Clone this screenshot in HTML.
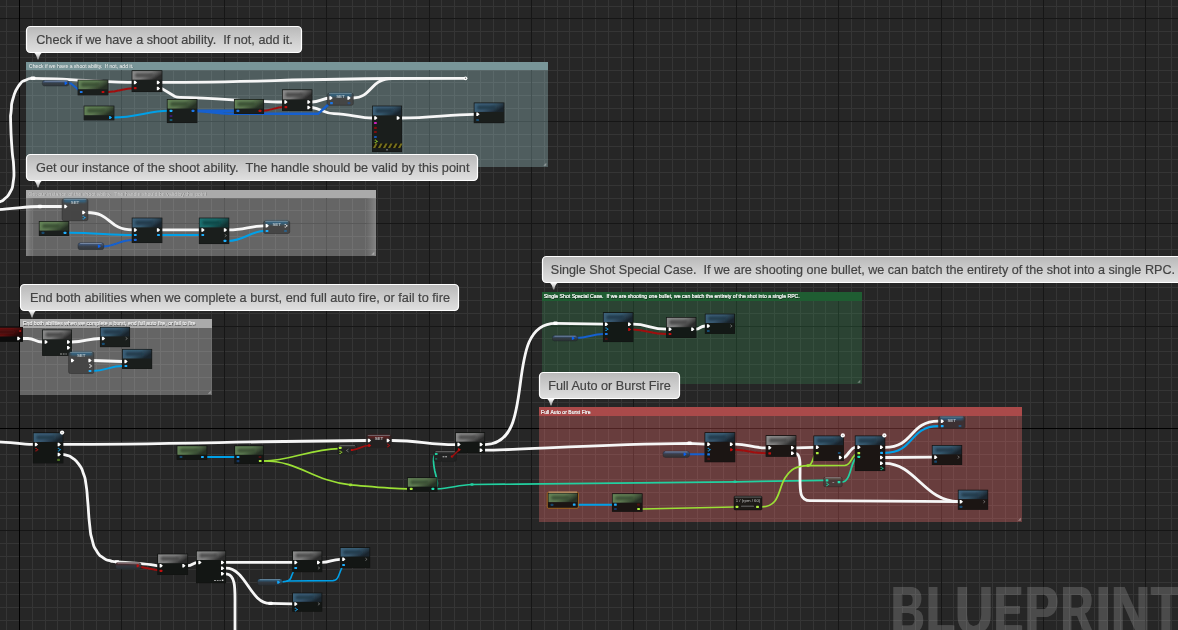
<!DOCTYPE html>
<html><head><meta charset="utf-8"><title>Blueprint</title>
<style>
html,body{margin:0;padding:0;background:#262626;overflow:hidden;}
body{width:1178px;height:630px;font-family:"Liberation Sans",sans-serif;}
svg{display:block;}
</style></head><body>
<svg width="1178" height="630" viewBox="0 0 1178 630" font-family="Liberation Sans, sans-serif">
<defs>
<linearGradient id="bub" x1="0" y1="0" x2="0" y2="1"><stop offset="0" stop-color="#b9b9b9"/><stop offset="0.55" stop-color="#cfcfcf"/><stop offset="1" stop-color="#e0e0e0"/></linearGradient>
<linearGradient id="arr" x1="0" y1="0" x2="0" y2="1"><stop offset="0" stop-color="#ffffff"/><stop offset="0.5" stop-color="#d0d0d0"/><stop offset="1" stop-color="#808080"/></linearGradient>
<linearGradient id="h_grey" x1="0" y1="0" x2="1" y2="0.45"><stop offset="0" stop-color="#8c8c8c"/><stop offset="0.55" stop-color="#8c8c8c" stop-opacity="0.92"/><stop offset="1" stop-color="#2c2c2c"/></linearGradient>
<linearGradient id="h_green" x1="0" y1="0" x2="1" y2="0.45"><stop offset="0" stop-color="#668559"/><stop offset="0.55" stop-color="#668559" stop-opacity="0.92"/><stop offset="1" stop-color="#283326"/></linearGradient>
<linearGradient id="h_blue" x1="0" y1="0" x2="1" y2="0.45"><stop offset="0" stop-color="#3e637c"/><stop offset="0.55" stop-color="#3e637c" stop-opacity="0.92"/><stop offset="1" stop-color="#1a252e"/></linearGradient>
<linearGradient id="h_teal" x1="0" y1="0" x2="1" y2="0.45"><stop offset="0" stop-color="#1e7474"/><stop offset="0.55" stop-color="#1e7474" stop-opacity="0.92"/><stop offset="1" stop-color="#123434"/></linearGradient>
<linearGradient id="h_red" x1="0" y1="0" x2="1" y2="0.45"><stop offset="0" stop-color="#6c1313"/><stop offset="0.55" stop-color="#6c1313" stop-opacity="0.92"/><stop offset="1" stop-color="#260909"/></linearGradient>
<filter id="blur1" x="-20%" y="-60%" width="140%" height="220%"><feGaussianBlur stdDeviation="1.1"/></filter>
<filter id="wblur" x="-5%" y="-5%" width="110%" height="110%"><feGaussianBlur stdDeviation="0.35"/></filter>
<linearGradient id="glowL" x1="0" y1="0" x2="1" y2="0"><stop offset="0" stop-color="#fff" stop-opacity="0.2"/><stop offset="1" stop-color="#fff" stop-opacity="0"/></linearGradient>
<linearGradient id="glowR" x1="0" y1="0" x2="1" y2="0"><stop offset="0" stop-color="#fff" stop-opacity="0"/><stop offset="1" stop-color="#fff" stop-opacity="0.2"/></linearGradient>
<linearGradient id="pg40639c" x1="0" y1="0" x2="0" y2="1"><stop offset="0" stop-color="#40639c"/><stop offset="0.55" stop-color="#333a43"/><stop offset="1" stop-color="#2c3137"/></linearGradient>
<linearGradient id="pg5e2424" x1="0" y1="0" x2="0" y2="1"><stop offset="0" stop-color="#5e2424"/><stop offset="0.55" stop-color="#333a43"/><stop offset="1" stop-color="#2c3137"/></linearGradient>
<linearGradient id="pg2f77a6" x1="0" y1="0" x2="0" y2="1"><stop offset="0" stop-color="#2f77a6"/><stop offset="0.55" stop-color="#333a43"/><stop offset="1" stop-color="#2c3137"/></linearGradient>
</defs>
<rect width="1178" height="630" fill="#262626"/>
<g shape-rendering="crispEdges"><rect x="6" y="0" width="1" height="630" fill="#353535"/>
<rect x="32" y="0" width="1" height="630" fill="#353535"/>
<rect x="45" y="0" width="1" height="630" fill="#353535"/>
<rect x="57" y="0" width="1" height="630" fill="#353535"/>
<rect x="70" y="0" width="1" height="630" fill="#353535"/>
<rect x="83" y="0" width="1" height="630" fill="#353535"/>
<rect x="96" y="0" width="1" height="630" fill="#353535"/>
<rect x="109" y="0" width="1" height="630" fill="#353535"/>
<rect x="134" y="0" width="1" height="630" fill="#353535"/>
<rect x="147" y="0" width="1" height="630" fill="#353535"/>
<rect x="160" y="0" width="1" height="630" fill="#353535"/>
<rect x="173" y="0" width="1" height="630" fill="#353535"/>
<rect x="185" y="0" width="1" height="630" fill="#353535"/>
<rect x="198" y="0" width="1" height="630" fill="#353535"/>
<rect x="211" y="0" width="1" height="630" fill="#353535"/>
<rect x="237" y="0" width="1" height="630" fill="#353535"/>
<rect x="249" y="0" width="1" height="630" fill="#353535"/>
<rect x="262" y="0" width="1" height="630" fill="#353535"/>
<rect x="275" y="0" width="1" height="630" fill="#353535"/>
<rect x="288" y="0" width="1" height="630" fill="#353535"/>
<rect x="301" y="0" width="1" height="630" fill="#353535"/>
<rect x="313" y="0" width="1" height="630" fill="#353535"/>
<rect x="339" y="0" width="1" height="630" fill="#353535"/>
<rect x="352" y="0" width="1" height="630" fill="#353535"/>
<rect x="365" y="0" width="1" height="630" fill="#353535"/>
<rect x="377" y="0" width="1" height="630" fill="#353535"/>
<rect x="390" y="0" width="1" height="630" fill="#353535"/>
<rect x="403" y="0" width="1" height="630" fill="#353535"/>
<rect x="416" y="0" width="1" height="630" fill="#353535"/>
<rect x="441" y="0" width="1" height="630" fill="#353535"/>
<rect x="454" y="0" width="1" height="630" fill="#353535"/>
<rect x="467" y="0" width="1" height="630" fill="#353535"/>
<rect x="480" y="0" width="1" height="630" fill="#353535"/>
<rect x="493" y="0" width="1" height="630" fill="#353535"/>
<rect x="505" y="0" width="1" height="630" fill="#353535"/>
<rect x="518" y="0" width="1" height="630" fill="#353535"/>
<rect x="544" y="0" width="1" height="630" fill="#353535"/>
<rect x="557" y="0" width="1" height="630" fill="#353535"/>
<rect x="569" y="0" width="1" height="630" fill="#353535"/>
<rect x="582" y="0" width="1" height="630" fill="#353535"/>
<rect x="595" y="0" width="1" height="630" fill="#353535"/>
<rect x="608" y="0" width="1" height="630" fill="#353535"/>
<rect x="621" y="0" width="1" height="630" fill="#353535"/>
<rect x="646" y="0" width="1" height="630" fill="#353535"/>
<rect x="659" y="0" width="1" height="630" fill="#353535"/>
<rect x="672" y="0" width="1" height="630" fill="#353535"/>
<rect x="685" y="0" width="1" height="630" fill="#353535"/>
<rect x="697" y="0" width="1" height="630" fill="#353535"/>
<rect x="710" y="0" width="1" height="630" fill="#353535"/>
<rect x="723" y="0" width="1" height="630" fill="#353535"/>
<rect x="749" y="0" width="1" height="630" fill="#353535"/>
<rect x="761" y="0" width="1" height="630" fill="#353535"/>
<rect x="774" y="0" width="1" height="630" fill="#353535"/>
<rect x="787" y="0" width="1" height="630" fill="#353535"/>
<rect x="800" y="0" width="1" height="630" fill="#353535"/>
<rect x="813" y="0" width="1" height="630" fill="#353535"/>
<rect x="825" y="0" width="1" height="630" fill="#353535"/>
<rect x="851" y="0" width="1" height="630" fill="#353535"/>
<rect x="864" y="0" width="1" height="630" fill="#353535"/>
<rect x="877" y="0" width="1" height="630" fill="#353535"/>
<rect x="889" y="0" width="1" height="630" fill="#353535"/>
<rect x="902" y="0" width="1" height="630" fill="#353535"/>
<rect x="915" y="0" width="1" height="630" fill="#353535"/>
<rect x="928" y="0" width="1" height="630" fill="#353535"/>
<rect x="953" y="0" width="1" height="630" fill="#353535"/>
<rect x="966" y="0" width="1" height="630" fill="#353535"/>
<rect x="979" y="0" width="1" height="630" fill="#353535"/>
<rect x="992" y="0" width="1" height="630" fill="#353535"/>
<rect x="1005" y="0" width="1" height="630" fill="#353535"/>
<rect x="1017" y="0" width="1" height="630" fill="#353535"/>
<rect x="1030" y="0" width="1" height="630" fill="#353535"/>
<rect x="1056" y="0" width="1" height="630" fill="#353535"/>
<rect x="1069" y="0" width="1" height="630" fill="#353535"/>
<rect x="1081" y="0" width="1" height="630" fill="#353535"/>
<rect x="1094" y="0" width="1" height="630" fill="#353535"/>
<rect x="1107" y="0" width="1" height="630" fill="#353535"/>
<rect x="1120" y="0" width="1" height="630" fill="#353535"/>
<rect x="1133" y="0" width="1" height="630" fill="#353535"/>
<rect x="1158" y="0" width="1" height="630" fill="#353535"/>
<rect x="1171" y="0" width="1" height="630" fill="#353535"/>
<rect x="0" y="6" width="1178" height="1" fill="#353535"/>
<rect x="0" y="31" width="1178" height="1" fill="#353535"/>
<rect x="0" y="44" width="1178" height="1" fill="#353535"/>
<rect x="0" y="57" width="1178" height="1" fill="#353535"/>
<rect x="0" y="70" width="1178" height="1" fill="#353535"/>
<rect x="0" y="82" width="1178" height="1" fill="#353535"/>
<rect x="0" y="95" width="1178" height="1" fill="#353535"/>
<rect x="0" y="108" width="1178" height="1" fill="#353535"/>
<rect x="0" y="134" width="1178" height="1" fill="#353535"/>
<rect x="0" y="146" width="1178" height="1" fill="#353535"/>
<rect x="0" y="159" width="1178" height="1" fill="#353535"/>
<rect x="0" y="172" width="1178" height="1" fill="#353535"/>
<rect x="0" y="185" width="1178" height="1" fill="#353535"/>
<rect x="0" y="198" width="1178" height="1" fill="#353535"/>
<rect x="0" y="210" width="1178" height="1" fill="#353535"/>
<rect x="0" y="236" width="1178" height="1" fill="#353535"/>
<rect x="0" y="249" width="1178" height="1" fill="#353535"/>
<rect x="0" y="262" width="1178" height="1" fill="#353535"/>
<rect x="0" y="274" width="1178" height="1" fill="#353535"/>
<rect x="0" y="287" width="1178" height="1" fill="#353535"/>
<rect x="0" y="300" width="1178" height="1" fill="#353535"/>
<rect x="0" y="313" width="1178" height="1" fill="#353535"/>
<rect x="0" y="338" width="1178" height="1" fill="#353535"/>
<rect x="0" y="351" width="1178" height="1" fill="#353535"/>
<rect x="0" y="364" width="1178" height="1" fill="#353535"/>
<rect x="0" y="377" width="1178" height="1" fill="#353535"/>
<rect x="0" y="390" width="1178" height="1" fill="#353535"/>
<rect x="0" y="402" width="1178" height="1" fill="#353535"/>
<rect x="0" y="415" width="1178" height="1" fill="#353535"/>
<rect x="0" y="441" width="1178" height="1" fill="#353535"/>
<rect x="0" y="454" width="1178" height="1" fill="#353535"/>
<rect x="0" y="466" width="1178" height="1" fill="#353535"/>
<rect x="0" y="479" width="1178" height="1" fill="#353535"/>
<rect x="0" y="492" width="1178" height="1" fill="#353535"/>
<rect x="0" y="505" width="1178" height="1" fill="#353535"/>
<rect x="0" y="518" width="1178" height="1" fill="#353535"/>
<rect x="0" y="543" width="1178" height="1" fill="#353535"/>
<rect x="0" y="556" width="1178" height="1" fill="#353535"/>
<rect x="0" y="569" width="1178" height="1" fill="#353535"/>
<rect x="0" y="582" width="1178" height="1" fill="#353535"/>
<rect x="0" y="594" width="1178" height="1" fill="#353535"/>
<rect x="0" y="607" width="1178" height="1" fill="#353535"/>
<rect x="0" y="620" width="1178" height="1" fill="#353535"/>
<rect x="121" y="0" width="1" height="630" fill="#161616"/>
<rect x="224" y="0" width="1" height="630" fill="#161616"/>
<rect x="326" y="0" width="1" height="630" fill="#161616"/>
<rect x="429" y="0" width="1" height="630" fill="#161616"/>
<rect x="531" y="0" width="1" height="630" fill="#161616"/>
<rect x="633" y="0" width="1" height="630" fill="#161616"/>
<rect x="736" y="0" width="1" height="630" fill="#161616"/>
<rect x="838" y="0" width="1" height="630" fill="#161616"/>
<rect x="941" y="0" width="1" height="630" fill="#161616"/>
<rect x="1043" y="0" width="1" height="630" fill="#161616"/>
<rect x="1145" y="0" width="1" height="630" fill="#161616"/>
<rect x="0" y="18" width="1178" height="1" fill="#161616"/>
<rect x="0" y="121" width="1178" height="1" fill="#161616"/>
<rect x="0" y="223" width="1178" height="1" fill="#161616"/>
<rect x="0" y="326" width="1178" height="1" fill="#161616"/>
<rect x="0" y="530" width="1178" height="1" fill="#161616"/>
<rect x="19" y="0" width="1" height="630" fill="#000000"/>
<rect x="0" y="428" width="1178" height="1" fill="#000000"/></g>
<g fill="#fff" opacity="0.17" font-weight="bold" font-size="66.1"><text transform="translate(890.24,632.6) scale(0.6921,1)" x="0" y="0">B</text><text transform="translate(891.24,632.6) scale(0.6921,1)" x="0" y="0">B</text><text transform="translate(892.24,632.6) scale(0.6921,1)" x="0" y="0">B</text><text transform="translate(925.84,632.6) scale(0.6928,1)" x="0" y="0">L</text><text transform="translate(926.84,632.6) scale(0.6928,1)" x="0" y="0">L</text><text transform="translate(927.84,632.6) scale(0.6928,1)" x="0" y="0">L</text><text transform="translate(954.49,632.6) scale(0.7828,1)" x="0" y="0">U</text><text transform="translate(955.49,632.6) scale(0.7828,1)" x="0" y="0">U</text><text transform="translate(956.49,632.6) scale(0.7828,1)" x="0" y="0">U</text><text transform="translate(993.14,632.6) scale(0.6472,1)" x="0" y="0">E</text><text transform="translate(994.14,632.6) scale(0.6472,1)" x="0" y="0">E</text><text transform="translate(995.14,632.6) scale(0.6472,1)" x="0" y="0">E</text><text transform="translate(1024.07,632.6) scale(0.7539,1)" x="0" y="0">P</text><text transform="translate(1025.07,632.6) scale(0.7539,1)" x="0" y="0">P</text><text transform="translate(1026.07,632.6) scale(0.7539,1)" x="0" y="0">P</text><text transform="translate(1059.93,632.6) scale(0.6721,1)" x="0" y="0">R</text><text transform="translate(1060.93,632.6) scale(0.6721,1)" x="0" y="0">R</text><text transform="translate(1061.93,632.6) scale(0.6721,1)" x="0" y="0">R</text><text transform="translate(1094.18,632.6) scale(0.9768,1)" x="0" y="0">I</text><text transform="translate(1110.32,632.6) scale(0.8106,1)" x="0" y="0">N</text><text transform="translate(1111.32,632.6) scale(0.8106,1)" x="0" y="0">N</text><text transform="translate(1112.32,632.6) scale(0.8106,1)" x="0" y="0">N</text><text transform="translate(1150.26,632.6) scale(0.7245,1)" x="0" y="0">T</text><text transform="translate(1151.26,632.6) scale(0.7245,1)" x="0" y="0">T</text><text transform="translate(1152.26,632.6) scale(0.7245,1)" x="0" y="0">T</text></g>
<g id="boxes" style="will-change:opacity" opacity="0.999"><g shape-rendering="crispEdges"><rect x="26" y="62" width="522" height="105" fill="#505e5f"/>
<rect x="32" y="62" width="1" height="105" fill="#5b696a"/>
<rect x="45" y="62" width="1" height="105" fill="#5b696a"/>
<rect x="57" y="62" width="1" height="105" fill="#5b696a"/>
<rect x="70" y="62" width="1" height="105" fill="#5b696a"/>
<rect x="83" y="62" width="1" height="105" fill="#5b696a"/>
<rect x="96" y="62" width="1" height="105" fill="#5b696a"/>
<rect x="109" y="62" width="1" height="105" fill="#5b696a"/>
<rect x="134" y="62" width="1" height="105" fill="#5b696a"/>
<rect x="147" y="62" width="1" height="105" fill="#5b696a"/>
<rect x="160" y="62" width="1" height="105" fill="#5b696a"/>
<rect x="173" y="62" width="1" height="105" fill="#5b696a"/>
<rect x="185" y="62" width="1" height="105" fill="#5b696a"/>
<rect x="198" y="62" width="1" height="105" fill="#5b696a"/>
<rect x="211" y="62" width="1" height="105" fill="#5b696a"/>
<rect x="237" y="62" width="1" height="105" fill="#5b696a"/>
<rect x="249" y="62" width="1" height="105" fill="#5b696a"/>
<rect x="262" y="62" width="1" height="105" fill="#5b696a"/>
<rect x="275" y="62" width="1" height="105" fill="#5b696a"/>
<rect x="288" y="62" width="1" height="105" fill="#5b696a"/>
<rect x="301" y="62" width="1" height="105" fill="#5b696a"/>
<rect x="313" y="62" width="1" height="105" fill="#5b696a"/>
<rect x="339" y="62" width="1" height="105" fill="#5b696a"/>
<rect x="352" y="62" width="1" height="105" fill="#5b696a"/>
<rect x="365" y="62" width="1" height="105" fill="#5b696a"/>
<rect x="377" y="62" width="1" height="105" fill="#5b696a"/>
<rect x="390" y="62" width="1" height="105" fill="#5b696a"/>
<rect x="403" y="62" width="1" height="105" fill="#5b696a"/>
<rect x="416" y="62" width="1" height="105" fill="#5b696a"/>
<rect x="441" y="62" width="1" height="105" fill="#5b696a"/>
<rect x="454" y="62" width="1" height="105" fill="#5b696a"/>
<rect x="467" y="62" width="1" height="105" fill="#5b696a"/>
<rect x="480" y="62" width="1" height="105" fill="#5b696a"/>
<rect x="493" y="62" width="1" height="105" fill="#5b696a"/>
<rect x="505" y="62" width="1" height="105" fill="#5b696a"/>
<rect x="518" y="62" width="1" height="105" fill="#5b696a"/>
<rect x="544" y="62" width="1" height="105" fill="#5b696a"/>
<rect x="26" y="70" width="522" height="1" fill="#5b696a"/>
<rect x="26" y="82" width="522" height="1" fill="#5b696a"/>
<rect x="26" y="95" width="522" height="1" fill="#5b696a"/>
<rect x="26" y="108" width="522" height="1" fill="#5b696a"/>
<rect x="26" y="134" width="522" height="1" fill="#5b696a"/>
<rect x="26" y="146" width="522" height="1" fill="#5b696a"/>
<rect x="26" y="159" width="522" height="1" fill="#5b696a"/>
<rect x="121" y="62" width="1" height="105" fill="#445253"/>
<rect x="224" y="62" width="1" height="105" fill="#445253"/>
<rect x="326" y="62" width="1" height="105" fill="#445253"/>
<rect x="429" y="62" width="1" height="105" fill="#445253"/>
<rect x="531" y="62" width="1" height="105" fill="#445253"/>
<rect x="26" y="121" width="522" height="1" fill="#445253"/>
<rect x="26" y="62" width="522" height="8" fill="#799699"/></g>
<text x="29.45" y="68.3" font-size="5.2" fill="#000" fill-opacity="0.45" textLength="104.5" lengthAdjust="spacingAndGlyphs" xml:space="preserve">Check if we have a shoot ability.  If not, add it.</text>
<text x="29.0" y="67.8" font-size="5.2" fill="#e2eaea" stroke="#e2eaea" stroke-width="0.12" textLength="104.5" lengthAdjust="spacingAndGlyphs" xml:space="preserve">Check if we have a shoot ability.  If not, add it.</text>
<path d="M546.3 162.8 L546.3 165.8 L543.3 165.8 Z" fill="#fff" fill-opacity="0.35"/>
<g shape-rendering="crispEdges"><rect x="26" y="190" width="350" height="66" fill="#666666"/>
<rect x="32" y="190" width="1" height="66" fill="#717171"/>
<rect x="45" y="190" width="1" height="66" fill="#717171"/>
<rect x="57" y="190" width="1" height="66" fill="#717171"/>
<rect x="70" y="190" width="1" height="66" fill="#717171"/>
<rect x="83" y="190" width="1" height="66" fill="#717171"/>
<rect x="96" y="190" width="1" height="66" fill="#717171"/>
<rect x="109" y="190" width="1" height="66" fill="#717171"/>
<rect x="134" y="190" width="1" height="66" fill="#717171"/>
<rect x="147" y="190" width="1" height="66" fill="#717171"/>
<rect x="160" y="190" width="1" height="66" fill="#717171"/>
<rect x="173" y="190" width="1" height="66" fill="#717171"/>
<rect x="185" y="190" width="1" height="66" fill="#717171"/>
<rect x="198" y="190" width="1" height="66" fill="#717171"/>
<rect x="211" y="190" width="1" height="66" fill="#717171"/>
<rect x="237" y="190" width="1" height="66" fill="#717171"/>
<rect x="249" y="190" width="1" height="66" fill="#717171"/>
<rect x="262" y="190" width="1" height="66" fill="#717171"/>
<rect x="275" y="190" width="1" height="66" fill="#717171"/>
<rect x="288" y="190" width="1" height="66" fill="#717171"/>
<rect x="301" y="190" width="1" height="66" fill="#717171"/>
<rect x="313" y="190" width="1" height="66" fill="#717171"/>
<rect x="339" y="190" width="1" height="66" fill="#717171"/>
<rect x="352" y="190" width="1" height="66" fill="#717171"/>
<rect x="365" y="190" width="1" height="66" fill="#717171"/>
<rect x="26" y="198" width="350" height="1" fill="#717171"/>
<rect x="26" y="210" width="350" height="1" fill="#717171"/>
<rect x="26" y="236" width="350" height="1" fill="#717171"/>
<rect x="26" y="249" width="350" height="1" fill="#717171"/>
<rect x="121" y="190" width="1" height="66" fill="#5a5a5a"/>
<rect x="224" y="190" width="1" height="66" fill="#5a5a5a"/>
<rect x="326" y="190" width="1" height="66" fill="#5a5a5a"/>
<rect x="26" y="223" width="350" height="1" fill="#5a5a5a"/>
<rect x="26" y="190" width="350" height="8" fill="#ababab"/></g>
<text x="28.95" y="196.3" font-size="5.2" fill="#000" fill-opacity="0.45" textLength="178" lengthAdjust="spacingAndGlyphs" xml:space="preserve">Get our instance of the shoot ability.  The handle should be valid by this point</text>
<text x="28.5" y="195.8" font-size="5.2" fill="#cdcdcd" stroke="#cdcdcd" stroke-width="0.12" textLength="178" lengthAdjust="spacingAndGlyphs" xml:space="preserve">Get our instance of the shoot ability.  The handle should be valid by this point</text>
<path d="M374.3 251.8 L374.3 254.8 L371.3 254.8 Z" fill="#fff" fill-opacity="0.35"/>
<g shape-rendering="crispEdges"><rect x="20" y="319" width="192" height="76" fill="#666666"/>
<rect x="32" y="319" width="1" height="76" fill="#717171"/>
<rect x="45" y="319" width="1" height="76" fill="#717171"/>
<rect x="57" y="319" width="1" height="76" fill="#717171"/>
<rect x="70" y="319" width="1" height="76" fill="#717171"/>
<rect x="83" y="319" width="1" height="76" fill="#717171"/>
<rect x="96" y="319" width="1" height="76" fill="#717171"/>
<rect x="109" y="319" width="1" height="76" fill="#717171"/>
<rect x="134" y="319" width="1" height="76" fill="#717171"/>
<rect x="147" y="319" width="1" height="76" fill="#717171"/>
<rect x="160" y="319" width="1" height="76" fill="#717171"/>
<rect x="173" y="319" width="1" height="76" fill="#717171"/>
<rect x="185" y="319" width="1" height="76" fill="#717171"/>
<rect x="198" y="319" width="1" height="76" fill="#717171"/>
<rect x="211" y="319" width="1" height="76" fill="#717171"/>
<rect x="20" y="338" width="192" height="1" fill="#717171"/>
<rect x="20" y="351" width="192" height="1" fill="#717171"/>
<rect x="20" y="364" width="192" height="1" fill="#717171"/>
<rect x="20" y="377" width="192" height="1" fill="#717171"/>
<rect x="20" y="390" width="192" height="1" fill="#717171"/>
<rect x="121" y="319" width="1" height="76" fill="#5a5a5a"/>
<rect x="20" y="326" width="192" height="1" fill="#5a5a5a"/>
<rect x="20" y="319" width="192" height="8.5" fill="#ababab"/></g>
<text x="23.45" y="325.8" font-size="5.2" fill="#000" fill-opacity="0.65" textLength="172.5" lengthAdjust="spacingAndGlyphs" xml:space="preserve">End both abilities when we complete a burst, end full auto fire, or fail to fire</text>
<text x="23.0" y="325.3" font-size="5.2" fill="#efefef" stroke="#efefef" stroke-width="0.15" textLength="172.5" lengthAdjust="spacingAndGlyphs" xml:space="preserve">End both abilities when we complete a burst, end full auto fire, or fail to fire</text>
<path d="M210.8 390.8 L210.8 393.8 L207.8 393.8 Z" fill="#fff" fill-opacity="0.35"/>
<g shape-rendering="crispEdges"><rect x="542" y="292" width="320" height="92" fill="#2c4434"/>
<rect x="544" y="292" width="1" height="92" fill="#374f3f"/>
<rect x="557" y="292" width="1" height="92" fill="#374f3f"/>
<rect x="569" y="292" width="1" height="92" fill="#374f3f"/>
<rect x="582" y="292" width="1" height="92" fill="#374f3f"/>
<rect x="595" y="292" width="1" height="92" fill="#374f3f"/>
<rect x="608" y="292" width="1" height="92" fill="#374f3f"/>
<rect x="621" y="292" width="1" height="92" fill="#374f3f"/>
<rect x="646" y="292" width="1" height="92" fill="#374f3f"/>
<rect x="659" y="292" width="1" height="92" fill="#374f3f"/>
<rect x="672" y="292" width="1" height="92" fill="#374f3f"/>
<rect x="685" y="292" width="1" height="92" fill="#374f3f"/>
<rect x="697" y="292" width="1" height="92" fill="#374f3f"/>
<rect x="710" y="292" width="1" height="92" fill="#374f3f"/>
<rect x="723" y="292" width="1" height="92" fill="#374f3f"/>
<rect x="749" y="292" width="1" height="92" fill="#374f3f"/>
<rect x="761" y="292" width="1" height="92" fill="#374f3f"/>
<rect x="774" y="292" width="1" height="92" fill="#374f3f"/>
<rect x="787" y="292" width="1" height="92" fill="#374f3f"/>
<rect x="800" y="292" width="1" height="92" fill="#374f3f"/>
<rect x="813" y="292" width="1" height="92" fill="#374f3f"/>
<rect x="825" y="292" width="1" height="92" fill="#374f3f"/>
<rect x="851" y="292" width="1" height="92" fill="#374f3f"/>
<rect x="542" y="300" width="320" height="1" fill="#374f3f"/>
<rect x="542" y="313" width="320" height="1" fill="#374f3f"/>
<rect x="542" y="338" width="320" height="1" fill="#374f3f"/>
<rect x="542" y="351" width="320" height="1" fill="#374f3f"/>
<rect x="542" y="364" width="320" height="1" fill="#374f3f"/>
<rect x="542" y="377" width="320" height="1" fill="#374f3f"/>
<rect x="633" y="292" width="1" height="92" fill="#203828"/>
<rect x="736" y="292" width="1" height="92" fill="#203828"/>
<rect x="838" y="292" width="1" height="92" fill="#203828"/>
<rect x="542" y="326" width="320" height="1" fill="#203828"/>
<rect x="542" y="292" width="320" height="9" fill="#205e33"/></g>
<text x="544.25" y="298.8" font-size="5.6" fill="#000" fill-opacity="0.7" textLength="256" lengthAdjust="spacingAndGlyphs" xml:space="preserve">Single Shot Special Case.  If we are shooting one bullet, we can batch the entirety of the shot into a single RPC.</text>
<text x="543.8" y="298.3" font-size="5.6" fill="#ffffff" stroke="#ffffff" stroke-width="0.22" textLength="256" lengthAdjust="spacingAndGlyphs" xml:space="preserve">Single Shot Special Case.  If we are shooting one bullet, we can batch the entirety of the shot into a single RPC.</text>
<path d="M860.3 379.8 L860.3 382.8 L857.3 382.8 Z" fill="#fff" fill-opacity="0.35"/>
<g shape-rendering="crispEdges"><rect x="539" y="407" width="483" height="115" fill="#693e3e"/>
<rect x="544" y="407" width="1" height="115" fill="#744949"/>
<rect x="557" y="407" width="1" height="115" fill="#744949"/>
<rect x="569" y="407" width="1" height="115" fill="#744949"/>
<rect x="582" y="407" width="1" height="115" fill="#744949"/>
<rect x="595" y="407" width="1" height="115" fill="#744949"/>
<rect x="608" y="407" width="1" height="115" fill="#744949"/>
<rect x="621" y="407" width="1" height="115" fill="#744949"/>
<rect x="646" y="407" width="1" height="115" fill="#744949"/>
<rect x="659" y="407" width="1" height="115" fill="#744949"/>
<rect x="672" y="407" width="1" height="115" fill="#744949"/>
<rect x="685" y="407" width="1" height="115" fill="#744949"/>
<rect x="697" y="407" width="1" height="115" fill="#744949"/>
<rect x="710" y="407" width="1" height="115" fill="#744949"/>
<rect x="723" y="407" width="1" height="115" fill="#744949"/>
<rect x="749" y="407" width="1" height="115" fill="#744949"/>
<rect x="761" y="407" width="1" height="115" fill="#744949"/>
<rect x="774" y="407" width="1" height="115" fill="#744949"/>
<rect x="787" y="407" width="1" height="115" fill="#744949"/>
<rect x="800" y="407" width="1" height="115" fill="#744949"/>
<rect x="813" y="407" width="1" height="115" fill="#744949"/>
<rect x="825" y="407" width="1" height="115" fill="#744949"/>
<rect x="851" y="407" width="1" height="115" fill="#744949"/>
<rect x="864" y="407" width="1" height="115" fill="#744949"/>
<rect x="877" y="407" width="1" height="115" fill="#744949"/>
<rect x="889" y="407" width="1" height="115" fill="#744949"/>
<rect x="902" y="407" width="1" height="115" fill="#744949"/>
<rect x="915" y="407" width="1" height="115" fill="#744949"/>
<rect x="928" y="407" width="1" height="115" fill="#744949"/>
<rect x="953" y="407" width="1" height="115" fill="#744949"/>
<rect x="966" y="407" width="1" height="115" fill="#744949"/>
<rect x="979" y="407" width="1" height="115" fill="#744949"/>
<rect x="992" y="407" width="1" height="115" fill="#744949"/>
<rect x="1005" y="407" width="1" height="115" fill="#744949"/>
<rect x="1017" y="407" width="1" height="115" fill="#744949"/>
<rect x="539" y="415" width="483" height="1" fill="#744949"/>
<rect x="539" y="441" width="483" height="1" fill="#744949"/>
<rect x="539" y="454" width="483" height="1" fill="#744949"/>
<rect x="539" y="466" width="483" height="1" fill="#744949"/>
<rect x="539" y="479" width="483" height="1" fill="#744949"/>
<rect x="539" y="492" width="483" height="1" fill="#744949"/>
<rect x="539" y="505" width="483" height="1" fill="#744949"/>
<rect x="539" y="518" width="483" height="1" fill="#744949"/>
<rect x="633" y="407" width="1" height="115" fill="#5d3232"/>
<rect x="736" y="407" width="1" height="115" fill="#5d3232"/>
<rect x="838" y="407" width="1" height="115" fill="#5d3232"/>
<rect x="941" y="407" width="1" height="115" fill="#5d3232"/>
<rect x="539" y="428" width="483" height="1" fill="#4e2323"/>
<rect x="539" y="407" width="483" height="9" fill="#ab4b4b"/></g>
<text x="541.45" y="414.3" font-size="5.6" fill="#000" fill-opacity="0.7" textLength="49.5" lengthAdjust="spacingAndGlyphs" xml:space="preserve">Full Auto or Burst Fire</text>
<text x="541" y="413.8" font-size="5.6" fill="#ffffff" stroke="#ffffff" stroke-width="0.22" textLength="49.5" lengthAdjust="spacingAndGlyphs" xml:space="preserve">Full Auto or Burst Fire</text>
<path d="M1020.8 517.8 L1020.8 520.8 L1017.8 520.8 Z" fill="#fff" fill-opacity="0.35"/>
<rect x="26" y="198" width="8" height="58" fill="url(#glowL)"/><rect x="366" y="198" width="10" height="58" fill="url(#glowR)"/></g>
<g id="wires" filter="url(#wblur)"><path d="M-6 203.5 C-4.00 202.90 -3.67 203.40 0 201.7 C3.67 200.00 1.60 201.63 5 198.4 C8.40 195.17 7.47 197.47 10.2 192 C12.93 186.53 12.03 190.43 13.2 182 C14.37 173.57 14.10 177.70 13.7 166.7 C13.30 155.70 13.00 163.40 12 149 C11.00 134.60 10.97 136.23 10.7 123.5 C10.43 110.77 10.37 119.30 11.2 110.8 C12.03 102.30 10.60 106.47 13.2 98 C15.80 89.53 14.73 91.40 19 85.4 C23.27 79.40 21.33 82.37 26 80 C30.67 77.63 30.67 78.87 33 78.3" fill="none" stroke="#f6f6f6" stroke-width="2.8" stroke-linecap="round" stroke-linejoin="round" opacity="1"/>
<path d="M33 78.3 C70 78.3 100 82.4 132 82.4" fill="none" stroke="#f6f6f6" stroke-width="2.8" stroke-linecap="round" stroke-linejoin="round" opacity="1"/>
<path d="M162 82.4 C240 82.4 300 79 388 78.5 L465 78.3" fill="none" stroke="#f6f6f6" stroke-width="2.8" stroke-linecap="round" stroke-linejoin="round" opacity="1"/>
<path d="M162 88.6 L175 96.5 Q177 97.3 180 97.3 C220 98 250 102 282 102" fill="none" stroke="#f6f6f6" stroke-width="2.8" stroke-linecap="round" stroke-linejoin="round" opacity="1"/>
<path d="M312 102 C320 102 322 98 331 98" fill="none" stroke="#f6f6f6" stroke-width="2.8" stroke-linecap="round" stroke-linejoin="round" opacity="1"/>
<path d="M353 98 C372 98 370 78.6 392 78.5" fill="none" stroke="#f6f6f6" stroke-width="2.8" stroke-linecap="round" stroke-linejoin="round" opacity="1"/>
<path d="M312 107.5 C322 109 324 113.4 334 113.6 C350 114 360 118 372 118" fill="none" stroke="#f6f6f6" stroke-width="2.8" stroke-linecap="round" stroke-linejoin="round" opacity="1"/>
<path d="M402 118 C430 118 450 114.3 474 114.3" fill="none" stroke="#f6f6f6" stroke-width="2.8" stroke-linecap="round" stroke-linejoin="round" opacity="1"/>
<path d="M69 83.2 L71 83.5 L80 91 L82 92" fill="none" stroke="#1360d0" stroke-width="2.0" stroke-linecap="round" stroke-linejoin="round" opacity="1"/>
<path d="M108 92 C118 92 124 88.3 133 88.2" fill="none" stroke="#a01010" stroke-width="1.9" stroke-linecap="round" stroke-linejoin="round" opacity="1"/>
<path d="M114 117.5 C135 117.5 150 110.8 168 110.8" fill="none" stroke="#06a0e8" stroke-width="2.0" stroke-linecap="round" stroke-linejoin="round" opacity="1"/>
<path d="M197 110.8 L235 110.8" fill="none" stroke="#1360d0" stroke-width="2.4" stroke-linecap="round" stroke-linejoin="round" opacity="1"/>
<path d="M197 111 C215 112 222 113.8 232 113.8 L318 113.8 L329 104 L331 103.2" fill="none" stroke="#1360d0" stroke-width="2.4" stroke-linecap="round" stroke-linejoin="round" opacity="1"/>
<path d="M264 110.8 C272 110 276 107.2 284 107" fill="none" stroke="#a01010" stroke-width="1.9" stroke-linecap="round" stroke-linejoin="round" opacity="1"/>
<path d="M-2 209.6 C15 209 25 206.5 40 206.5 L62 206.5" fill="none" stroke="#f6f6f6" stroke-width="2.8" stroke-linecap="round" stroke-linejoin="round" opacity="1"/>
<path d="M87 212.5 C112.025 212.5 107.475 229.8 132.5 229.8" fill="none" stroke="#f6f6f6" stroke-width="2.8" stroke-linecap="round" stroke-linejoin="round" opacity="1"/>
<path d="M162 229.9 L199.5 229.9" fill="none" stroke="#f6f6f6" stroke-width="2.8" stroke-linecap="round" stroke-linejoin="round" opacity="1"/>
<path d="M229 229.9 C244 229.9 250 226 264 225.8" fill="none" stroke="#f6f6f6" stroke-width="2.8" stroke-linecap="round" stroke-linejoin="round" opacity="1"/>
<path d="M69 232.8 C95 232.8 110 235 132.5 235" fill="none" stroke="#06a0e8" stroke-width="2.0" stroke-linecap="round" stroke-linejoin="round" opacity="1"/>
<path d="M162 235 L199.5 235" fill="none" stroke="#06a0e8" stroke-width="2.0" stroke-linecap="round" stroke-linejoin="round" opacity="1"/>
<path d="M103 246.5 C116 246 120 240 132.5 239.9" fill="none" stroke="#1360d0" stroke-width="2.0" stroke-linecap="round" stroke-linejoin="round" opacity="1"/>
<path d="M228 240.9 C244 240.9 250 231.2 264 231" fill="none" stroke="#06a0e8" stroke-width="2.0" stroke-linecap="round" stroke-linejoin="round" opacity="1"/>
<path d="M22 338.5 L28 338.5 C35 338.5 35 342 42.5 342" fill="none" stroke="#f6f6f6" stroke-width="2.8" stroke-linecap="round" stroke-linejoin="round" opacity="1"/>
<path d="M71.6 342 C85 342 88 338.5 100.3 338.5" fill="none" stroke="#f6f6f6" stroke-width="2.8" stroke-linecap="round" stroke-linejoin="round" opacity="1"/>
<path d="M70.5 347.7 C74 350 68 358 71 360.5" fill="none" stroke="#f6f6f6" stroke-width="1.6" stroke-linecap="round" stroke-linejoin="round" opacity="0.55"/>
<path d="M93 360.5 L122.4 361.5" fill="none" stroke="#f6f6f6" stroke-width="2.8" stroke-linecap="round" stroke-linejoin="round" opacity="1"/>
<path d="M92 371 C106 371 110 366 122.4 366" fill="none" stroke="#06a0e8" stroke-width="2.0" stroke-linecap="round" stroke-linejoin="round" opacity="1"/>
<path d="M-2 441.8 C12 442 20 444.4 33 444.4" fill="none" stroke="#f6f6f6" stroke-width="2.8" stroke-linecap="round" stroke-linejoin="round" opacity="1"/>
<path d="M63 444.4 C150 444.4 250 441.5 326 441 L367 440.5" fill="none" stroke="#f6f6f6" stroke-width="2.8" stroke-linecap="round" stroke-linejoin="round" opacity="1"/>
<path d="M392 440.5 C420.575 440.5 426.925 444.6 455.5 444.6" fill="none" stroke="#f6f6f6" stroke-width="2.8" stroke-linecap="round" stroke-linejoin="round" opacity="1"/>
<path d="M485 444.6 C540 444.6 500.5 323.3 555.5 323.3 L603.5 324.2" fill="none" stroke="#f6f6f6" stroke-width="2.8" stroke-linecap="round" stroke-linejoin="round" opacity="1"/>
<path d="M485 450.2 C520 450.2 600 444 689 443.3 L705 444.2" fill="none" stroke="#f6f6f6" stroke-width="2.8" stroke-linecap="round" stroke-linejoin="round" opacity="1"/>
<path d="M63 454.6 C64.33 454.87 63.93 454.33 67 455.4 C70.07 456.47 68.23 454.80 72.2 457.8 C76.17 460.80 75.20 459.23 78.9 464.4 C82.60 469.57 80.93 466.63 83.3 473.3 C85.67 479.97 84.50 474.77 86 484.4 C87.50 494.03 86.60 488.87 87.8 502.2 C89.00 515.53 88.13 511.80 89.6 524.4 C91.07 537.00 89.83 531.10 92.2 540 C94.57 548.90 93.00 545.17 96.7 551.1 C100.40 557.03 98.87 554.60 103.3 557.8 C107.73 561.00 105.53 559.37 110 560.7 C114.47 562.03 107.07 560.90 116.7 561.8 C126.33 562.70 124.83 562.07 138.9 563.4 C152.97 564.73 152.23 565.00 158.9 565.8" fill="none" stroke="#f6f6f6" stroke-width="2.8" stroke-linecap="round" stroke-linejoin="round" opacity="1"/>
<path d="M207 457 L235 457" fill="none" stroke="#06a0e8" stroke-width="2.0" stroke-linecap="round" stroke-linejoin="round" opacity="1"/>
<path d="M263.6 461 C290 461 310 449 339 448.6" fill="none" stroke="#9be036" stroke-width="1.7" stroke-linecap="round" stroke-linejoin="round" opacity="1"/>
<path d="M263.6 461 C300 461 310 480 350.6 484.9 C375 487 390 488.8 407.4 488.8" fill="none" stroke="#9be036" stroke-width="1.7" stroke-linecap="round" stroke-linejoin="round" opacity="1"/>
<path d="M434 488.8 C440 488 436.5 478 434.8 471 C433 462 432.5 455 436 454" fill="none" stroke="#22d0a0" stroke-width="1.7" stroke-linecap="round" stroke-linejoin="round" opacity="1"/>
<path d="M437 488.8 C450 488.5 458 485 472 484.5 L520 484.1 L735 481.8 L824 480.4" fill="none" stroke="#22d0a0" stroke-width="1.7" stroke-linecap="round" stroke-linejoin="round" opacity="1"/>
<path d="M138 566.5 L161 570.8" fill="none" stroke="#a01010" stroke-width="1.9" stroke-linecap="round" stroke-linejoin="round" opacity="1"/>
<path d="M187.7 565.7 C193 565.5 192 562.5 199 562.4" fill="none" stroke="#f6f6f6" stroke-width="2.8" stroke-linecap="round" stroke-linejoin="round" opacity="1"/>
<path d="M226 562.4 L292.6 562.4" fill="none" stroke="#f6f6f6" stroke-width="2.8" stroke-linecap="round" stroke-linejoin="round" opacity="1"/>
<path d="M322 562.4 C330 562.4 332 559.3 340.2 559.3" fill="none" stroke="#f6f6f6" stroke-width="2.8" stroke-linecap="round" stroke-linejoin="round" opacity="1"/>
<path d="M226 568.2 C246 568.2 250 603.4 270 603.4 L292.6 603.9" fill="none" stroke="#f6f6f6" stroke-width="2.8" stroke-linecap="round" stroke-linejoin="round" opacity="1"/>
<path d="M226 573.8 C236 574.5 235 590 235 605 L235 632" fill="none" stroke="#f6f6f6" stroke-width="2.8" stroke-linecap="round" stroke-linejoin="round" opacity="1"/>
<path d="M279 582.4 L288 581 L333 580.6 Q337 580.4 338.5 576 L342.5 566" fill="none" stroke="#06a0e8" stroke-width="1.6" stroke-linecap="round" stroke-linejoin="round" opacity="1"/>
<path d="M287 581.1 Q290.5 580.5 291.5 576 L294.5 569" fill="none" stroke="#06a0e8" stroke-width="1.6" stroke-linecap="round" stroke-linejoin="round" opacity="1"/>
<path d="M633 324.2 C648 324.2 650 329.2 666.4 329.2" fill="none" stroke="#f6f6f6" stroke-width="2.8" stroke-linecap="round" stroke-linejoin="round" opacity="1"/>
<path d="M696 329.2 C700 329.2 700 326 705.2 326" fill="none" stroke="#f6f6f6" stroke-width="2.8" stroke-linecap="round" stroke-linejoin="round" opacity="1"/>
<path d="M633 329.5 C648 330 650 334 666.4 334" fill="none" stroke="#a01010" stroke-width="1.9" stroke-linecap="round" stroke-linejoin="round" opacity="1"/>
<path d="M576 338 C588 338 592 334 603.3 334" fill="none" stroke="#1360d0" stroke-width="2.0" stroke-linecap="round" stroke-linejoin="round" opacity="1"/>
<path d="M735 444.2 C748 444.2 752 447.8 766 447.8" fill="none" stroke="#f6f6f6" stroke-width="2.8" stroke-linecap="round" stroke-linejoin="round" opacity="1"/>
<path d="M735 449.7 C748 450 752 453.3 766 453.3" fill="none" stroke="#a01010" stroke-width="1.9" stroke-linecap="round" stroke-linejoin="round" opacity="1"/>
<path d="M688 454.3 L705 454.3" fill="none" stroke="#1360d0" stroke-width="2.0" stroke-linecap="round" stroke-linejoin="round" opacity="1"/>
<path d="M796 447.8 L813.8 447.3" fill="none" stroke="#f6f6f6" stroke-width="2.8" stroke-linecap="round" stroke-linejoin="round" opacity="1"/>
<path d="M796 453.5 C801 455 800 465 800 478 C800 492 800 500.7 810 500.7 L958 501.7" fill="none" stroke="#f6f6f6" stroke-width="2.8" stroke-linecap="round" stroke-linejoin="round" opacity="1"/>
<path d="M843.5 457.5 C848 457 850 447.5 855.2 447.3" fill="none" stroke="#f6f6f6" stroke-width="2.8" stroke-linecap="round" stroke-linejoin="round" opacity="1"/>
<path d="M885 447.3 C914.37 447.3 909.03 421.2 938.4 421.2" fill="none" stroke="#f6f6f6" stroke-width="2.8" stroke-linecap="round" stroke-linejoin="round" opacity="1"/>
<path d="M885 452.9 C914.37 452.9 909.03 426.1 938.4 426.1" fill="none" stroke="#06a0e8" stroke-width="2.1" stroke-linecap="round" stroke-linejoin="round" opacity="1"/>
<path d="M885 457.5 L932.2 457.2" fill="none" stroke="#f6f6f6" stroke-width="2.8" stroke-linecap="round" stroke-linejoin="round" opacity="1"/>
<path d="M885 463.3 C915 463.3 925 501.5 958.2 501.6" fill="none" stroke="#f6f6f6" stroke-width="2.8" stroke-linecap="round" stroke-linejoin="round" opacity="1"/>
<path d="M577.5 504.7 L612.3 504.7" fill="none" stroke="#06a0e8" stroke-width="2.0" stroke-linecap="round" stroke-linejoin="round" opacity="1"/>
<path d="M642.2 509 L734 507" fill="none" stroke="#9be036" stroke-width="1.7" stroke-linecap="round" stroke-linejoin="round" opacity="1"/>
<path d="M762 506.8 C780 506.5 778 489 785 478 C791 469 796 466 808 465.6" fill="none" stroke="#9be036" stroke-width="1.7" stroke-linecap="round" stroke-linejoin="round" opacity="1"/>
<path d="M808 465.6 C814 465 812 454 817.3 453.2" fill="none" stroke="#9be036" stroke-width="1.7" stroke-linecap="round" stroke-linejoin="round" opacity="1"/>
<path d="M808 465.6 L845 465.3 C852 465 851 454 858.8 453.2" fill="none" stroke="#9be036" stroke-width="1.7" stroke-linecap="round" stroke-linejoin="round" opacity="1"/>
<path d="M842 482.1 C852 482 850 457.5 858.8 456.7" fill="none" stroke="#22d0a0" stroke-width="1.7" stroke-linecap="round" stroke-linejoin="round" opacity="1"/></g>
<g id="nodes" opacity="0.999"><rect x="42.3" y="80.4" width="26.700000000000003" height="5.599999999999994" rx="2.4" fill="url(#pg40639c)" fill-opacity="0.86" stroke="#222528" stroke-width="0.4"/>
<rect x="44.5" y="80.75" width="22.300000000000004" height="0.75" fill="#dfe8f4" opacity="0.45"/>
<path d="M64.6 81.7 L65.8 81.7 L67.6 83.2 L65.8 84.7 L64.6 84.7 Z" fill="#0a62f4"/>
<rect x="30.5" y="76.6" width="5" height="3.4" rx="1.1" fill="#fff"/>
<circle cx="465.5" cy="78.3" r="1.9" fill="#fff"/><circle cx="465.5" cy="78.3" r="0.7" fill="#777"/>
<rect x="77.65" y="79.65" width="30.7" height="15.7" fill="#111312"/>
<rect x="78" y="80" width="30" height="15" fill="#1b1f1d"/>
<rect x="78.4" y="80.4" width="29.2" height="8.8" fill="url(#h_green)"/>
<rect x="81" y="82.6" width="18.6" height="4.200000000000001" rx="2" fill="#3a5034" filter="url(#blur1)" opacity="0.9"/>
<rect x="131.65" y="70.35000000000001" width="30.7" height="21.7" fill="#111312"/>
<rect x="132" y="70.7" width="30" height="21.0" fill="#1b1f1d"/>
<rect x="132.4" y="71.10000000000001" width="29.2" height="8.6" fill="url(#h_grey)"/>
<rect x="135" y="73.3" width="18.6" height="4.0" rx="2" fill="#4a4a4a" filter="url(#blur1)" opacity="0.9"/>
<rect x="83.65" y="105.65" width="30.7" height="14.7" fill="#111312"/>
<rect x="84" y="106" width="30" height="14" fill="#1b1f1d"/>
<rect x="84.4" y="106.4" width="29.2" height="8.8" fill="url(#h_green)"/>
<rect x="87" y="108.6" width="18.6" height="4.200000000000001" rx="2" fill="#3a5034" filter="url(#blur1)" opacity="0.9"/>
<rect x="166.85" y="99.05000000000001" width="30.50000000000001" height="23.999999999999996" fill="#111312"/>
<rect x="167.2" y="99.4" width="29.80000000000001" height="23.299999999999997" fill="#1b1f1d"/>
<rect x="167.6" y="99.80000000000001" width="29.00000000000001" height="8.8" fill="url(#h_green)"/>
<rect x="170.2" y="102.0" width="18.476000000000006" height="4.200000000000001" rx="2" fill="#3a5034" filter="url(#blur1)" opacity="0.9"/>
<rect x="233.95000000000002" y="99.05000000000001" width="30.099999999999977" height="14.899999999999988" fill="#111312"/>
<rect x="234.3" y="99.4" width="29.399999999999977" height="14.199999999999989" fill="#1b1f1d"/>
<rect x="234.70000000000002" y="99.80000000000001" width="28.599999999999977" height="8.8" fill="url(#h_green)"/>
<rect x="237.3" y="102.0" width="18.227999999999987" height="4.200000000000001" rx="2" fill="#3a5034" filter="url(#blur1)" opacity="0.9"/>
<rect x="282.04999999999995" y="89.45" width="30.300000000000022" height="21.600000000000005" fill="#111312"/>
<rect x="282.4" y="89.8" width="29.600000000000023" height="20.900000000000006" fill="#1b1f1d"/>
<rect x="282.79999999999995" y="90.2" width="28.800000000000022" height="9.2" fill="url(#h_grey)"/>
<rect x="285.4" y="92.39999999999999" width="18.352000000000015" height="4.6" rx="2" fill="#4a4a4a" filter="url(#blur1)" opacity="0.9"/>
<rect x="327.5" y="93.2" width="25.80000000000001" height="12.099999999999994" rx="1.8" fill="#444444" fill-opacity="0.94" stroke="#2a2a2a" stroke-width="0.5"/>
<rect x="329.0" y="93.4" width="22.80000000000001" height="3.0" rx="1.2" fill="#2b7db0" filter="url(#blur1)" opacity="0.65"/>
<rect x="329.0" y="93.3" width="22.80000000000001" height="0.6" fill="#bfe0f0" opacity="0.55"/>
<text x="340.4" y="98.2" font-size="4.4" font-weight="bold" fill="#d0d8dc" text-anchor="middle" opacity="0.8">SET</text>
<rect x="372.04999999999995" y="105.65" width="30.00000000000001" height="46.39999999999999" fill="#111312"/>
<rect x="372.4" y="106" width="29.30000000000001" height="45.69999999999999" fill="#1b1f1d"/>
<rect x="372.79999999999995" y="106.4" width="28.50000000000001" height="9" fill="url(#h_blue)"/>
<rect x="375.4" y="108.6" width="18.166000000000007" height="4.4" rx="2" fill="#223a4b" filter="url(#blur1)" opacity="0.9"/>
<g opacity="0.8"><rect x="372.6" y="143.6" width="28.9" height="4.4" fill="#15150c"/><path d="M373 148 L375.4 143.6 L377.6 143.6 L375.2 148 Z" fill="#8f861c"/><path d="M378 148 L380.4 143.6 L382.6 143.6 L380.2 148 Z" fill="#8f861c"/><path d="M383 148 L385.4 143.6 L387.6 143.6 L385.2 148 Z" fill="#8f861c"/><path d="M388 148 L390.4 143.6 L392.6 143.6 L390.2 148 Z" fill="#8f861c"/><path d="M393 148 L395.4 143.6 L397.6 143.6 L395.2 148 Z" fill="#8f861c"/><path d="M398 148 L400.4 143.6 L402.6 143.6 L400.2 148 Z" fill="#8f861c"/><path d="M385.8 150.3 L387 148.9 L388.2 150.3 Z" fill="#ddd"/></g>
<rect x="473.75" y="102.55000000000001" width="30.599999999999977" height="20.59999999999999" fill="#111312"/>
<rect x="474.1" y="102.9" width="29.899999999999977" height="19.89999999999999" fill="#1b1f1d"/>
<rect x="474.5" y="103.30000000000001" width="29.099999999999977" height="8.6" fill="url(#h_blue)"/>
<rect x="477.1" y="105.5" width="18.537999999999986" height="4.0" rx="2" fill="#223a4b" filter="url(#blur1)" opacity="0.9"/>
<rect x="37.75" y="204.8" width="4.5" height="3.4" rx="1.1" fill="#fff"/>
<rect x="62.1" y="199.1" width="25.800000000000004" height="21.599999999999994" rx="1.8" fill="#444444" fill-opacity="0.94" stroke="#2a2a2a" stroke-width="0.5"/>
<rect x="63.6" y="199.29999999999998" width="22.800000000000004" height="3.0" rx="1.2" fill="#2b7db0" filter="url(#blur1)" opacity="0.65"/>
<rect x="63.6" y="199.2" width="22.800000000000004" height="0.6" fill="#bfe0f0" opacity="0.55"/>
<text x="75.0" y="204.1" font-size="4.4" font-weight="bold" fill="#d0d8dc" text-anchor="middle" opacity="0.8">SET</text>
<rect x="38.85" y="221.05" width="30.299999999999994" height="14.899999999999988" fill="#111312"/>
<rect x="39.2" y="221.4" width="29.599999999999994" height="14.199999999999989" fill="#1b1f1d"/>
<rect x="39.6" y="221.8" width="28.799999999999994" height="8.8" fill="url(#h_green)"/>
<rect x="42.2" y="224.0" width="18.351999999999997" height="4.200000000000001" rx="2" fill="#3a5034" filter="url(#blur1)" opacity="0.9"/>
<rect x="78" y="242.8" width="25.799999999999997" height="7.0" rx="2.4" fill="url(#pg40639c)" fill-opacity="0.86" stroke="#222528" stroke-width="0.4"/>
<rect x="80.2" y="243.15" width="21.4" height="0.75" fill="#dfe8f4" opacity="0.45"/>
<path d="M97.89999999999999 244.8 L99.1 244.8 L100.89999999999999 246.3 L99.1 247.8 L97.89999999999999 247.8 Z" fill="#0a62f4"/>
<rect x="131.75" y="217.65" width="30.600000000000005" height="25.399999999999988" fill="#111312"/>
<rect x="132.1" y="218" width="29.900000000000006" height="24.69999999999999" fill="#1b1f1d"/>
<rect x="132.5" y="218.4" width="29.100000000000005" height="9" fill="url(#h_blue)"/>
<rect x="135.1" y="220.6" width="18.538000000000004" height="4.4" rx="2" fill="#223a4b" filter="url(#blur1)" opacity="0.9"/>
<rect x="198.85" y="217.65" width="30.400000000000016" height="26.399999999999988" fill="#111312"/>
<rect x="199.2" y="218" width="29.700000000000017" height="25.69999999999999" fill="#1b1f1d"/>
<rect x="199.6" y="218.4" width="28.900000000000016" height="9" fill="url(#h_teal)"/>
<rect x="202.2" y="220.6" width="18.414000000000012" height="4.4" rx="2" fill="#0f4a4a" filter="url(#blur1)" opacity="0.9"/>
<rect x="263.6" y="221" width="26.099999999999966" height="12.5" rx="1.8" fill="#444444" fill-opacity="0.94" stroke="#2a2a2a" stroke-width="0.5"/>
<rect x="265.1" y="221.2" width="23.099999999999966" height="3.0" rx="1.2" fill="#2b7db0" filter="url(#blur1)" opacity="0.65"/>
<rect x="265.1" y="221.1" width="23.099999999999966" height="0.6" fill="#bfe0f0" opacity="0.55"/>
<text x="276.65" y="226.0" font-size="4.4" font-weight="bold" fill="#d0d8dc" text-anchor="middle" opacity="0.8">SET</text>
<rect x="-5.35" y="326.95" width="28.3" height="14.899999999999988" fill="#111312"/>
<rect x="-5" y="327.3" width="27.6" height="14.199999999999989" fill="#0d0d0d"/>
<rect x="-4.6" y="327.7" width="26.8" height="8.8" fill="url(#h_red)"/>
<rect x="-2" y="329.90000000000003" width="17.112000000000002" height="4.200000000000001" rx="2" fill="#450b0b" filter="url(#blur1)" opacity="0.9"/>
<rect x="42.15" y="329.54999999999995" width="29.799999999999994" height="26.300000000000022" fill="#111312"/>
<rect x="42.5" y="329.9" width="29.099999999999994" height="25.600000000000023" fill="#1b1f1d"/>
<rect x="42.9" y="330.29999999999995" width="28.299999999999994" height="9" fill="url(#h_grey)"/>
<rect x="45.5" y="332.5" width="18.041999999999998" height="4.4" rx="2" fill="#4a4a4a" filter="url(#blur1)" opacity="0.9"/>
<rect x="99.95" y="326.84999999999997" width="30.09999999999999" height="20.300000000000022" fill="#111312"/>
<rect x="100.3" y="327.2" width="29.39999999999999" height="19.600000000000023" fill="#1b1f1d"/>
<rect x="100.7" y="327.59999999999997" width="28.59999999999999" height="8.8" fill="url(#h_blue)"/>
<rect x="103.3" y="329.8" width="18.227999999999994" height="4.200000000000001" rx="2" fill="#223a4b" filter="url(#blur1)" opacity="0.9"/>
<rect x="68.6" y="352" width="25.200000000000003" height="21.600000000000023" rx="1.8" fill="#444444" fill-opacity="0.94" stroke="#2a2a2a" stroke-width="0.5"/>
<rect x="70.1" y="352.2" width="22.200000000000003" height="3.0" rx="1.2" fill="#2b7db0" filter="url(#blur1)" opacity="0.65"/>
<rect x="70.1" y="352.1" width="22.200000000000003" height="0.6" fill="#bfe0f0" opacity="0.55"/>
<text x="81.19999999999999" y="357.0" font-size="4.4" font-weight="bold" fill="#d0d8dc" text-anchor="middle" opacity="0.8">SET</text>
<rect x="122.05000000000001" y="348.95" width="30.100000000000005" height="20.00000000000001" fill="#111312"/>
<rect x="122.4" y="349.3" width="29.400000000000006" height="19.30000000000001" fill="#1b1f1d"/>
<rect x="122.80000000000001" y="349.7" width="28.600000000000005" height="8.8" fill="url(#h_blue)"/>
<rect x="125.4" y="351.90000000000003" width="18.228000000000005" height="4.200000000000001" rx="2" fill="#223a4b" filter="url(#blur1)" opacity="0.9"/>
<rect x="114.75" y="560.1999999999999" width="4.5" height="3.4" rx="1.1" fill="#fff"/>
<rect x="32.85" y="432.45" width="30.499999999999996" height="30.899999999999988" fill="#111312"/>
<rect x="33.2" y="432.8" width="29.799999999999997" height="30.19999999999999" fill="#141715"/>
<rect x="33.6" y="433.2" width="28.999999999999996" height="8.8" fill="url(#h_blue)"/>
<rect x="36.2" y="435.40000000000003" width="18.476" height="4.200000000000001" rx="2" fill="#223a4b" filter="url(#blur1)" opacity="0.9"/>
<circle cx="62.1" cy="432.6" r="2.15" fill="#fff"/><circle cx="62.1" cy="432.6" r="0.7" fill="#aaa"/>
<rect x="176.65" y="445.45" width="30.600000000000005" height="14.299999999999965" fill="#111312"/>
<rect x="177" y="445.8" width="29.900000000000006" height="13.599999999999966" fill="#141715"/>
<rect x="177.4" y="446.2" width="29.100000000000005" height="8.6" fill="url(#h_green)"/>
<rect x="180" y="448.40000000000003" width="18.538000000000004" height="4.0" rx="2" fill="#3a5034" filter="url(#blur1)" opacity="0.9"/>
<rect x="234.35" y="445.45" width="29.600000000000033" height="18.399999999999988" fill="#111312"/>
<rect x="234.7" y="445.8" width="28.900000000000034" height="17.69999999999999" fill="#141715"/>
<rect x="235.1" y="446.2" width="28.100000000000033" height="8.6" fill="url(#h_green)"/>
<rect x="237.7" y="448.40000000000003" width="17.91800000000002" height="4.0" rx="2" fill="#3a5034" filter="url(#blur1)" opacity="0.9"/>
<rect x="348.90000000000003" y="483.59999999999997" width="3.4" height="2.6" rx="1.1" fill="#9be036"/>
<rect x="337.8" y="445.1" width="18.7" height="9.2" rx="1.5" fill="#232424" stroke="#1a1a1a" stroke-width="0.4"/><rect x="339.3" y="445.2" width="15.7" height="0.7" fill="#ccc" opacity="0.55"/><rect x="338.5" y="445.8" width="17.3" height="1.6" fill="#444" opacity="0.5"/>
<rect x="366.3" y="435" width="25.30000000000001" height="13.5" rx="1.8" fill="#242222" fill-opacity="0.94" stroke="#2a2a2a" stroke-width="0.5"/>
<rect x="367.8" y="435.2" width="22.30000000000001" height="3.0" rx="1.2" fill="#8a2828" filter="url(#blur1)" opacity="0.65"/>
<rect x="367.8" y="435.1" width="22.30000000000001" height="0.6" fill="#bfe0f0" opacity="0.55"/>
<text x="378.95000000000005" y="440.0" font-size="4.4" font-weight="bold" fill="#d0d8dc" text-anchor="middle" opacity="0.8">SET</text>
<rect x="455.15" y="432.34999999999997" width="29.899999999999988" height="20.600000000000033" fill="#111312"/>
<rect x="455.5" y="432.7" width="29.19999999999999" height="19.900000000000034" fill="#141715"/>
<rect x="455.9" y="433.09999999999997" width="28.399999999999988" height="8.6" fill="url(#h_grey)"/>
<rect x="458.5" y="435.3" width="18.103999999999992" height="4.0" rx="2" fill="#4a4a4a" filter="url(#blur1)" opacity="0.9"/>
<rect x="434.1" y="451" width="22.2" height="10.3" rx="1.5" fill="#232424" stroke="#1a1a1a" stroke-width="0.4"/><rect x="435.6" y="451.1" width="19.2" height="0.7" fill="#ccc" opacity="0.55"/><rect x="434.8" y="451.7" width="20.8" height="1.6" fill="#444" opacity="0.5"/>
<rect x="407.04999999999995" y="477.34999999999997" width="30.400000000000045" height="14.300000000000022" fill="#111312"/>
<rect x="407.4" y="477.7" width="29.700000000000045" height="13.600000000000023" fill="#141715"/>
<rect x="407.79999999999995" y="478.09999999999997" width="28.900000000000045" height="8.6" fill="url(#h_green)"/>
<rect x="410.4" y="480.3" width="18.414000000000026" height="4.0" rx="2" fill="#3a5034" filter="url(#blur1)" opacity="0.9"/>
<rect x="470.3" y="483.2" width="3.4" height="2.6" rx="1.1" fill="#22d0a0"/>
<rect x="733.3" y="480.5" width="3.4" height="2.6" rx="1.1" fill="#22d0a0"/>
<rect x="268.25" y="601.6999999999999" width="4.5" height="3.4" rx="1.1" fill="#fff"/>
<rect x="115.6" y="562.4" width="25.5" height="6.899999999999977" rx="2.4" fill="url(#pg5e2424)" fill-opacity="0.86" stroke="#222528" stroke-width="0.4"/>
<rect x="117.8" y="562.75" width="21.1" height="0.75" fill="#dfe8f4" opacity="0.45"/>
<path d="M136.6 564.3499999999999 L137.8 564.3499999999999 L139.6 565.8499999999999 L137.8 567.3499999999999 L136.6 567.3499999999999 Z" fill="#c01010"/>
<rect x="157.35" y="553.65" width="30.7" height="21.300000000000022" fill="#111312"/>
<rect x="157.7" y="554" width="30.0" height="20.600000000000023" fill="#141715"/>
<rect x="158.1" y="554.4" width="29.2" height="8.8" fill="url(#h_grey)"/>
<rect x="160.7" y="556.6" width="18.6" height="4.200000000000001" rx="2" fill="#4a4a4a" filter="url(#blur1)" opacity="0.9"/>
<rect x="196.05" y="550.65" width="29.999999999999982" height="32.49999999999996" fill="#111312"/>
<rect x="196.4" y="551" width="29.299999999999983" height="31.799999999999955" fill="#141715"/>
<rect x="196.8" y="551.4" width="28.499999999999982" height="8.6" fill="url(#h_grey)"/>
<rect x="199.4" y="553.6" width="18.16599999999999" height="4.0" rx="2" fill="#4a4a4a" filter="url(#blur1)" opacity="0.9"/>
<rect x="292.25" y="550.65" width="29.999999999999954" height="21.499999999999954" fill="#111312"/>
<rect x="292.6" y="551" width="29.299999999999955" height="20.799999999999955" fill="#141715"/>
<rect x="293.0" y="551.4" width="28.499999999999954" height="8.6" fill="url(#h_grey)"/>
<rect x="295.6" y="553.6" width="18.165999999999972" height="4.0" rx="2" fill="#4a4a4a" filter="url(#blur1)" opacity="0.9"/>
<rect x="339.84999999999997" y="547.25" width="30.300000000000022" height="20.599999999999977" fill="#111312"/>
<rect x="340.2" y="547.6" width="29.600000000000023" height="19.899999999999977" fill="#141715"/>
<rect x="340.59999999999997" y="548.0" width="28.800000000000022" height="8.6" fill="url(#h_blue)"/>
<rect x="343.2" y="550.2" width="18.352000000000015" height="4.0" rx="2" fill="#223a4b" filter="url(#blur1)" opacity="0.9"/>
<rect x="257.5" y="579" width="24.899999999999977" height="6.399999999999977" rx="2.4" fill="url(#pg2f77a6)" fill-opacity="0.86" stroke="#222528" stroke-width="0.4"/>
<rect x="259.7" y="579.35" width="20.49999999999998" height="0.75" fill="#dfe8f4" opacity="0.45"/>
<path d="M277.20000000000005 580.7 L278.40000000000003 580.7 L280.20000000000005 582.2 L278.40000000000003 583.7 L277.20000000000005 583.7 Z" fill="#10a8ff"/>
<rect x="292.25" y="592.65" width="29.999999999999954" height="18.999999999999954" fill="#111312"/>
<rect x="292.6" y="593" width="29.299999999999955" height="18.299999999999955" fill="#141715"/>
<rect x="293.0" y="593.4" width="28.499999999999954" height="8.4" fill="url(#h_blue)"/>
<rect x="295.6" y="595.6" width="18.165999999999972" height="3.8000000000000007" rx="2" fill="#223a4b" filter="url(#blur1)" opacity="0.9"/>
<rect x="553.25" y="321.6" width="4.5" height="3.4" rx="1.1" fill="#fff"/>
<rect x="552.3" y="335.4" width="25.5" height="5.5" rx="2.4" fill="url(#pg40639c)" fill-opacity="0.86" stroke="#222528" stroke-width="0.4"/>
<rect x="554.5" y="335.75" width="21.1" height="0.75" fill="#dfe8f4" opacity="0.45"/>
<path d="M571.8000000000001 336.65 L573.0 336.65 L574.8000000000001 338.15 L573.0 339.65 L571.8000000000001 339.65 Z" fill="#0a62f4"/>
<rect x="602.9499999999999" y="312.25" width="30.400000000000045" height="29.799999999999965" fill="#111312"/>
<rect x="603.3" y="312.6" width="29.700000000000045" height="29.099999999999966" fill="#141a17"/>
<rect x="603.6999999999999" y="313.0" width="28.900000000000045" height="9" fill="url(#h_blue)"/>
<rect x="606.3" y="315.20000000000005" width="18.414000000000026" height="4.4" rx="2" fill="#223a4b" filter="url(#blur1)" opacity="0.9"/>
<rect x="666.05" y="317.04999999999995" width="30.300000000000022" height="20.900000000000045" fill="#111312"/>
<rect x="666.4" y="317.4" width="29.600000000000023" height="20.200000000000045" fill="#141a17"/>
<rect x="666.8" y="317.79999999999995" width="28.800000000000022" height="9.4" fill="url(#h_grey)"/>
<rect x="669.4" y="320.0" width="18.352000000000015" height="4.800000000000001" rx="2" fill="#4a4a4a" filter="url(#blur1)" opacity="0.9"/>
<rect x="704.85" y="313.65" width="30.099999999999977" height="20.2" fill="#111312"/>
<rect x="705.2" y="314" width="29.399999999999977" height="19.5" fill="#141a17"/>
<rect x="705.6" y="314.4" width="28.599999999999977" height="8.6" fill="url(#h_blue)"/>
<rect x="708.2" y="316.6" width="18.227999999999987" height="4.0" rx="2" fill="#223a4b" filter="url(#blur1)" opacity="0.9"/>
<rect x="687.35" y="441.6" width="4.5" height="3.4" rx="1.1" fill="#fff"/>
<rect x="806.3" y="464.3" width="3.4" height="2.6" rx="1.1" fill="#9be036"/>
<rect x="663" y="451.2" width="26.600000000000023" height="6.199999999999989" rx="2.4" fill="url(#pg40639c)" fill-opacity="0.86" stroke="#222528" stroke-width="0.4"/>
<rect x="665.2" y="451.55" width="22.200000000000024" height="0.75" fill="#dfe8f4" opacity="0.45"/>
<path d="M683.6 452.79999999999995 L684.8 452.79999999999995 L686.6 454.29999999999995 L684.8 455.79999999999995 L683.6 455.79999999999995 Z" fill="#0a62f4"/>
<rect x="704.55" y="432.25" width="30.7" height="29.999999999999954" fill="#111312"/>
<rect x="704.9" y="432.6" width="30.0" height="29.299999999999955" fill="#1c1614"/>
<rect x="705.3" y="433.0" width="29.2" height="8.8" fill="url(#h_blue)"/>
<rect x="707.9" y="435.20000000000005" width="18.6" height="4.200000000000001" rx="2" fill="#223a4b" filter="url(#blur1)" opacity="0.9"/>
<rect x="765.65" y="435.25" width="30.7" height="21.499999999999954" fill="#111312"/>
<rect x="766" y="435.6" width="30" height="20.799999999999955" fill="#1c1614"/>
<rect x="766.4" y="436.0" width="29.2" height="9" fill="url(#h_grey)"/>
<rect x="769" y="438.20000000000005" width="18.6" height="4.4" rx="2" fill="#4a4a4a" filter="url(#blur1)" opacity="0.9"/>
<rect x="813.4499999999999" y="435.54999999999995" width="30.400000000000045" height="25.300000000000022" fill="#111312"/>
<rect x="813.8" y="435.9" width="29.700000000000045" height="24.600000000000023" fill="#1c1614"/>
<rect x="814.1999999999999" y="436.29999999999995" width="28.900000000000045" height="8.8" fill="url(#h_blue)"/>
<rect x="816.8" y="438.5" width="18.414000000000026" height="4.200000000000001" rx="2" fill="#223a4b" filter="url(#blur1)" opacity="0.9"/>
<circle cx="842.8" cy="435.4" r="2.15" fill="#fff"/><circle cx="842.8" cy="435.4" r="0.7" fill="#aaa"/>
<rect x="854.85" y="435.54999999999995" width="30.39999999999993" height="35.500000000000014" fill="#111312"/>
<rect x="855.2" y="435.9" width="29.699999999999932" height="34.80000000000001" fill="#1c1614"/>
<rect x="855.6" y="436.29999999999995" width="28.89999999999993" height="8.8" fill="url(#h_blue)"/>
<rect x="858.2" y="438.5" width="18.41399999999996" height="4.200000000000001" rx="2" fill="#223a4b" filter="url(#blur1)" opacity="0.9"/>
<circle cx="884.4" cy="435.4" r="2.15" fill="#fff"/><circle cx="884.4" cy="435.4" r="0.7" fill="#aaa"/>
<rect x="823.7" y="477.3" width="18.5" height="9.4" rx="1.5" fill="#4a3a3a" fill-opacity="0.92" stroke="#2a2020" stroke-width="0.4"/><rect x="825.2" y="477.4" width="15.5" height="0.7" fill="#ddd" opacity="0.6"/><rect x="824.4" y="478" width="17.1" height="1.6" fill="#776" opacity="0.4"/>
<rect x="938.4" y="416.6" width="26.5" height="11.699999999999989" rx="1.8" fill="#3a3032" fill-opacity="0.94" stroke="#2a2a2a" stroke-width="0.5"/>
<rect x="939.9" y="416.8" width="23.5" height="3.0" rx="1.2" fill="#2b7db0" filter="url(#blur1)" opacity="0.65"/>
<rect x="939.9" y="416.70000000000005" width="23.5" height="0.6" fill="#bfe0f0" opacity="0.55"/>
<text x="951.65" y="421.6" font-size="4.4" font-weight="bold" fill="#d0d8dc" text-anchor="middle" opacity="0.8">SET</text>
<rect x="931.85" y="445.04999999999995" width="30.29999999999991" height="19.900000000000045" fill="#111312"/>
<rect x="932.2" y="445.4" width="29.59999999999991" height="19.200000000000045" fill="#1c1614"/>
<rect x="932.6" y="445.79999999999995" width="28.79999999999991" height="8.6" fill="url(#h_blue)"/>
<rect x="935.2" y="448.0" width="18.351999999999943" height="4.0" rx="2" fill="#223a4b" filter="url(#blur1)" opacity="0.9"/>
<rect x="957.85" y="489.75" width="30.29999999999991" height="19.999999999999954" fill="#111312"/>
<rect x="958.2" y="490.1" width="29.59999999999991" height="19.299999999999955" fill="#1c1614"/>
<rect x="958.6" y="490.5" width="28.79999999999991" height="8.6" fill="url(#h_blue)"/>
<rect x="961.2" y="492.70000000000005" width="18.351999999999943" height="4.0" rx="2" fill="#223a4b" filter="url(#blur1)" opacity="0.9"/>
<rect x="547.75" y="492.75" width="30.099999999999977" height="14.999999999999954" fill="#111312"/>
<rect x="548.1" y="493.1" width="29.399999999999977" height="14.299999999999955" fill="#1c1614"/>
<rect x="548.5" y="493.5" width="28.599999999999977" height="8.6" fill="url(#h_green)"/>
<rect x="551.1" y="495.70000000000005" width="18.227999999999987" height="4.0" rx="2" fill="#3a5034" filter="url(#blur1)" opacity="0.9"/>
<rect x="547.2" y="492.20000000000005" width="31.199999999999978" height="16.099999999999955" fill="none" stroke="#a86c14" stroke-width="0.8" rx="1.4"/>
<rect x="548.6" y="491.70000000000005" width="28.399999999999977" height="0.8" fill="#f0d0b0" opacity="0.85"/>
<rect x="611.9499999999999" y="493.34999999999997" width="30.60000000000009" height="18.399999999999988" fill="#111312"/>
<rect x="612.3" y="493.7" width="29.90000000000009" height="17.69999999999999" fill="#1c1614"/>
<rect x="612.6999999999999" y="494.09999999999997" width="29.10000000000009" height="8.6" fill="url(#h_green)"/>
<rect x="615.3" y="496.3" width="18.538000000000057" height="4.0" rx="2" fill="#3a5034" filter="url(#blur1)" opacity="0.9"/>
<rect x="734" y="496.1" width="28" height="13.8" rx="1.2" fill="#1e1b18" stroke="#0e0e0e" stroke-width="0.5"/><rect x="734.6" y="496.3" width="26.8" height="1.6" fill="#666" opacity="0.6"/></g>
<g id="pins" opacity="0.999"><rect x="79.85000000000001" y="90.9" width="2.7" height="2.2" rx="0.5" fill="#1e78e8" opacity="1"/>
<rect x="101.65" y="90.9" width="2.7" height="2.2" rx="0.5" fill="#c01010" opacity="1"/>
<path d="M133.8 80.65 L135.20000000000002 80.65 L137.1 82.4 L135.20000000000002 84.15 L133.8 84.15 Z" fill="#fff"/>
<path d="M156.8 80.65 L158.20000000000002 80.65 L160.1 82.4 L158.20000000000002 84.15 L156.8 84.15 Z" fill="#fff"/>
<path d="M156.8 86.75 L158.20000000000002 86.75 L160.1 88.5 L158.20000000000002 90.25 L156.8 90.25 Z" fill="#fff"/>
<rect x="133.85" y="87.10000000000001" width="2.7" height="2.2" rx="0.5" fill="#c01010" opacity="1"/>
<path d="M109.10000000000001 116.1 L110.2 116.1 L112.10000000000001 117.6 L110.2 119.1 L109.10000000000001 119.1 Z" fill="#20b0ff"/>
<rect x="169.65" y="109.7" width="2.7" height="2.2" rx="0.5" fill="#20b0ff" opacity="1"/>
<rect x="191.65" y="109.7" width="2.7" height="2.2" rx="0.5" fill="#1e78e8" opacity="1"/>
<rect x="169.65" y="114.9" width="2.7" height="2.2" rx="0.5" fill="#5a1ab0" opacity="0.55"/>
<rect x="169.65" y="118.9" width="2.7" height="2.2" rx="0.5" fill="#1a90c0" opacity="0.55"/>
<rect x="236.55" y="109.7" width="2.7" height="2.2" rx="0.5" fill="#1e78e8" opacity="1"/>
<rect x="258.65" y="109.7" width="2.7" height="2.2" rx="0.5" fill="#c01010" opacity="1"/>
<path d="M284.29999999999995 100.25 L285.7 100.25 L287.59999999999997 102 L285.7 103.75 L284.29999999999995 103.75 Z" fill="#fff"/>
<path d="M307.29999999999995 100.25 L308.7 100.25 L310.59999999999997 102 L308.7 103.75 L307.29999999999995 103.75 Z" fill="#fff"/>
<path d="M307.29999999999995 105.75 L308.7 105.75 L310.59999999999997 107.5 L308.7 109.25 L307.29999999999995 109.25 Z" fill="#fff"/>
<rect x="284.54999999999995" y="106.10000000000001" width="2.7" height="2.2" rx="0.5" fill="#c01010" opacity="1"/>
<path d="M329.4 96.25 L330.8 96.25 L332.7 98 L330.8 99.75 L329.4 99.75 Z" fill="#fff"/>
<path d="M347.4 96.25 L348.8 96.25 L350.7 98 L348.8 99.75 L347.4 99.75 Z" fill="#fff"/>
<rect x="330.15" y="102.10000000000001" width="2.7" height="2.2" rx="0.5" fill="#1e78e8" opacity="1"/>
<rect x="347.65" y="102.10000000000001" width="2.7" height="2.2" rx="0.5" fill="#1a58b0" opacity="0.55"/>
<path d="M374.2 116.25 L375.6 116.25 L377.5 118 L375.6 119.75 L374.2 119.75 Z" fill="#fff"/>
<path d="M396.7 116.25 L398.1 116.25 L400.0 118 L398.1 119.75 L396.7 119.75 Z" fill="#fff"/>
<rect x="374.04999999999995" y="121.9" width="2.7" height="2.2" rx="0.5" fill="#d020c0" opacity="1"/>
<rect x="374.04999999999995" y="126.7" width="2.7" height="2.2" rx="0.5" fill="#801010" opacity="1"/>
<rect x="374.04999999999995" y="130.9" width="2.7" height="2.2" rx="0.5" fill="#801010" opacity="1"/>
<rect x="374.04999999999995" y="135.9" width="2.7" height="2.2" rx="0.5" fill="#1a58b0" opacity="1"/>
<path d="M374.70000000000005 140.20000000000002 A1.35 1.35 0 1 1 374.70000000000005 142.6" fill="none" stroke="#a0e030" stroke-width="0.95" opacity="1"/><rect x="376.8" y="140.95000000000002" width="0.9" height="0.9" fill="#a0e030" opacity="1"/>
<path d="M476.29999999999995 112.55 L477.7 112.55 L479.59999999999997 114.3 L477.7 116.05 L476.29999999999995 116.05 Z" fill="#fff"/>
<rect x="476.25" y="118.9" width="2.7" height="2.2" rx="0.5" fill="#1a78c0" opacity="0.55"/>
<path d="M64.2 204.75 L65.6 204.75 L67.5 206.5 L65.6 208.25 L64.2 208.25 Z" fill="#fff"/>
<path d="M82.2 210.75 L83.6 210.75 L85.5 212.5 L83.6 214.25 L82.2 214.25 Z" fill="#fff"/>
<path d="M82.6 216.4 A1.35 1.35 0 1 1 82.6 218.79999999999998" fill="none" stroke="#20b0ff" stroke-width="0.95" opacity="1"/><rect x="84.7" y="217.15" width="0.9" height="0.9" fill="#20b0ff" opacity="1"/>
<rect x="41.65" y="231.70000000000002" width="2.7" height="2.2" rx="0.5" fill="#1a70b0" opacity="0.55"/>
<rect x="63.65" y="231.70000000000002" width="2.7" height="2.2" rx="0.5" fill="#20b0ff" opacity="1"/>
<path d="M133.9 228.15 L135.3 228.15 L137.2 229.9 L135.3 231.65 L133.9 231.65 Z" fill="#fff"/>
<path d="M156.9 228.15 L158.3 228.15 L160.2 229.9 L158.3 231.65 L156.9 231.65 Z" fill="#fff"/>
<rect x="133.95000000000002" y="233.9" width="2.7" height="2.2" rx="0.5" fill="#20b0ff" opacity="1"/>
<rect x="157.15" y="233.9" width="2.7" height="2.2" rx="0.5" fill="#20b0ff" opacity="1"/>
<rect x="133.95000000000002" y="238.8" width="2.7" height="2.2" rx="0.5" fill="#1e68e0" opacity="1"/>
<path d="M201.4 228.15 L202.8 228.15 L204.7 229.9 L202.8 231.65 L201.4 231.65 Z" fill="#fff"/>
<path d="M223.8 228.15 L225.20000000000002 228.15 L227.1 229.9 L225.20000000000002 231.65 L223.8 231.65 Z" fill="#fff"/>
<rect x="201.45000000000002" y="233.9" width="2.7" height="2.2" rx="0.5" fill="#20b0ff" opacity="1"/>
<path d="M224.7 234.29999999999998 L226.5 235.6 L224.7 236.9" fill="none" stroke="#cfcfcf" stroke-width="0.6" opacity="0.7"/>
<rect x="223.65" y="239.8" width="2.7" height="2.2" rx="0.5" fill="#20b0ff" opacity="1"/>
<path d="M265.59999999999997 224.05 L267.0 224.05 L268.9 225.8 L267.0 227.55 L265.59999999999997 227.55 Z" fill="#fff"/>
<path d="M284.6 224.60000000000002 A1.35 1.35 0 1 1 284.6 227.0" fill="none" stroke="#eee" stroke-width="0.95" opacity="1"/><rect x="286.7" y="225.35000000000002" width="0.9" height="0.9" fill="#eee" opacity="1"/>
<rect x="265.65" y="229.9" width="2.7" height="2.2" rx="0.5" fill="#20b0ff" opacity="1"/>
<rect x="284.15" y="229.9" width="2.7" height="2.2" rx="0.5" fill="#1a78c0" opacity="0.55"/>
<path d="M17.2 336.75 L18.6 336.75 L20.5 338.5 L18.6 340.25 L17.2 340.25 Z" fill="#fff"/>
<rect x="19.2" y="330.25" width="2.0" height="1.5" rx="0.5" fill="#c01818" opacity="1"/>
<path d="M44.6 340.25 L46.0 340.25 L47.900000000000006 342 L46.0 343.75 L44.6 343.75 Z" fill="#fff"/>
<path d="M67.0 340.25 L68.39999999999999 340.25 L70.3 342 L68.39999999999999 343.75 L67.0 343.75 Z" fill="#fff"/>
<path d="M67.0 345.95 L68.39999999999999 345.95 L70.3 347.7 L68.39999999999999 349.45 L67.0 349.45 Z" fill="#fff"/>
<rect x="60" y="353.6" width="2.2" height="0.8" fill="#bbb"/><rect x="63" y="353.6" width="1.6" height="0.8" fill="#bbb"/><rect x="65.4" y="353.6" width="1.4" height="0.8" fill="#bbb"/>
<path d="M101.9 336.75 L103.3 336.75 L105.2 338.5 L103.3 340.25 L101.9 340.25 Z" fill="#fff"/>
<path d="M125.6 337.2 L127.4 338.5 L125.6 339.8" fill="none" stroke="#cfcfcf" stroke-width="0.6" opacity="0.7"/>
<rect x="101.95" y="342.79999999999995" width="2.7" height="2.2" rx="0.5" fill="#1a78c0" opacity="0.55"/>
<path d="M71.0 358.75 L72.39999999999999 358.75 L74.3 360.5 L72.39999999999999 362.25 L71.0 362.25 Z" fill="#fff"/>
<path d="M88.4 358.75 L89.8 358.75 L91.7 360.5 L89.8 362.25 L88.4 362.25 Z" fill="#fff"/>
<path d="M89.1 364.8 A1.35 1.35 0 1 1 89.1 367.2" fill="none" stroke="#eee" stroke-width="0.95" opacity="1"/><rect x="91.2" y="365.55" width="0.9" height="0.9" fill="#eee" opacity="1"/>
<rect x="88.65" y="369.9" width="2.7" height="2.2" rx="0.5" fill="#20b0ff" opacity="1"/>
<path d="M124.4 359.75 L125.8 359.75 L127.7 361.5 L125.8 363.25 L124.4 363.25 Z" fill="#fff"/>
<rect x="124.55000000000001" y="364.9" width="2.7" height="2.2" rx="0.5" fill="#20b0ff" opacity="1"/>
<path d="M34.8 442.65 L36.199999999999996 442.65 L38.1 444.4 L36.199999999999996 446.15 L34.8 446.15 Z" fill="#fff"/>
<path d="M57.6 442.65 L59.0 442.65 L60.900000000000006 444.4 L59.0 446.15 L57.6 446.15 Z" fill="#fff"/>
<path d="M57.6 452.75 L59.0 452.75 L60.900000000000006 454.5 L59.0 456.25 L57.6 456.25 Z" fill="#fff"/>
<path d="M35.300000000000004 448.5 A1.35 1.35 0 1 1 35.300000000000004 450.9" fill="none" stroke="#c01818" stroke-width="0.95" opacity="1"/><rect x="37.400000000000006" y="449.25" width="0.9" height="0.9" fill="#c01818" opacity="1"/>
<path d="M57.800000000000004 448.5 A1.35 1.35 0 1 1 57.800000000000004 450.9" fill="none" stroke="#20b0ff" stroke-width="0.95" opacity="1"/><rect x="59.900000000000006" y="449.25" width="0.9" height="0.9" fill="#20b0ff" opacity="1"/>
<rect x="57.15" y="458.79999999999995" width="2.7" height="2.2" rx="0.5" fill="#80c030" opacity="0.55"/>
<rect x="179.65" y="455.9" width="2.7" height="2.2" rx="0.5" fill="#1a70b0" opacity="0.55"/>
<rect x="201.05" y="455.9" width="2.7" height="2.2" rx="0.5" fill="#20b0ff" opacity="1"/>
<rect x="236.65" y="455.9" width="2.7" height="2.2" rx="0.5" fill="#20b0ff" opacity="1"/>
<rect x="236.65" y="460.09999999999997" width="2.7" height="2.2" rx="0.5" fill="#1a58b0" opacity="0.55"/>
<rect x="258.65" y="455.9" width="2.7" height="2.2" rx="0.5" fill="#801010" opacity="0.55"/>
<rect x="258.84999999999997" y="459.9" width="2.7" height="2.2" rx="0.5" fill="#b0f040" opacity="1"/>
<rect x="338.84999999999997" y="446.79999999999995" width="2.7" height="2.2" rx="0.5" fill="#b0f040" opacity="1"/>
<path d="M339.3 451.1 A1.35 1.35 0 1 1 339.3 453.5" fill="none" stroke="#a0e030" stroke-width="0.95" opacity="1"/><rect x="341.4" y="451.85" width="0.9" height="0.9" fill="#a0e030" opacity="1"/>
<path d="M348.6 449 L346.4 450.5 L348.6 452" stroke="#999" stroke-width="0.6" fill="none"/>
<rect x="350.79999999999995" y="449.04999999999995" width="2.4000000000000004" height="1.9000000000000001" rx="0.5" fill="#c01010" opacity="1"/>
<path d="M352.5 450 C360 449 362 445.6 369 445.5" fill="none" stroke="#a01010" stroke-width="1.7" stroke-linecap="round" stroke-linejoin="round" opacity="1"/>
<path d="M367.79999999999995 438.75 L369.2 438.75 L371.09999999999997 440.5 L369.2 442.25 L367.79999999999995 442.25 Z" fill="#fff"/>
<path d="M386.7 438.75 L388.1 438.75 L390.0 440.5 L388.1 442.25 L386.7 442.25 Z" fill="#fff"/>
<path d="M368.3 444.0 L369.40000000000003 444.0 L371.3 445.5 L369.40000000000003 447.0 L368.3 447.0 Z" fill="#c01010"/>
<path d="M387.1 444.3 A1.35 1.35 0 1 1 387.1 446.7" fill="none" stroke="#c01010" stroke-width="0.95" opacity="1"/><rect x="389.2" y="445.05" width="0.9" height="0.9" fill="#c01010" opacity="1"/>
<path d="M457.4 442.85 L458.8 442.85 L460.7 444.6 L458.8 446.35 L457.4 446.35 Z" fill="#fff"/>
<path d="M479.7 442.85 L481.1 442.85 L483.0 444.6 L481.1 446.35 L479.7 446.35 Z" fill="#fff"/>
<path d="M479.7 448.45 L481.1 448.45 L483.0 450.2 L481.1 451.95 L479.7 451.95 Z" fill="#fff"/>
<path d="M457.9 448.3 L459.0 448.3 L460.9 449.8 L459.0 451.3 L457.9 451.3 Z" fill="#c01010"/>
<rect x="434.84999999999997" y="452.9" width="2.7" height="2.2" rx="0.5" fill="#22d0a0" opacity="1"/>
<rect x="435.09999999999997" y="457.95" width="2.2" height="1.7" rx="0.5" fill="#22a080" opacity="0.55"/>
<rect x="442.6" y="456" width="1.8" height="1.4" fill="#999"/><rect x="445.2" y="456" width="1.8" height="1.4" fill="#999"/>
<rect x="450.79999999999995" y="455.54999999999995" width="2.4000000000000004" height="1.9000000000000001" rx="0.5" fill="#c01010" opacity="1"/>
<path d="M452.5 456.3 L458.5 450.5" fill="none" stroke="#a01010" stroke-width="1.4" stroke-linecap="round" stroke-linejoin="round" opacity="1"/>
<rect x="409.84999999999997" y="487.7" width="2.7" height="2.2" rx="0.5" fill="#b0f040" opacity="1"/>
<rect x="431.54999999999995" y="487.7" width="2.7" height="2.2" rx="0.5" fill="#22e0b0" opacity="1"/>
<path d="M159.6 563.95 L161.0 563.95 L162.89999999999998 565.7 L161.0 567.45 L159.6 567.45 Z" fill="#fff"/>
<path d="M182.3 563.95 L183.70000000000002 563.95 L185.6 565.7 L183.70000000000002 567.45 L182.3 567.45 Z" fill="#fff"/>
<rect x="159.65" y="569.6999999999999" width="2.7" height="2.2" rx="0.5" fill="#c01010" opacity="1"/>
<path d="M198.3 560.65 L199.70000000000002 560.65 L201.6 562.4 L199.70000000000002 564.15 L198.3 564.15 Z" fill="#fff"/>
<path d="M221.0 560.65 L222.4 560.65 L224.29999999999998 562.4 L222.4 564.15 L221.0 564.15 Z" fill="#fff"/>
<path d="M221.0 566.45 L222.4 566.45 L224.29999999999998 568.2 L222.4 569.95 L221.0 569.95 Z" fill="#fff"/>
<path d="M221.0 572.05 L222.4 572.05 L224.29999999999998 573.8 L222.4 575.55 L221.0 575.55 Z" fill="#fff"/>
<rect x="214" y="580" width="2.2" height="0.8" fill="#bbb"/><rect x="217" y="580" width="1.6" height="0.8" fill="#bbb"/><rect x="219.4" y="580" width="1.4" height="0.8" fill="#bbb"/><rect x="221.8" y="579.6" width="1.6" height="1.4" fill="#ddd"/>
<path d="M294.29999999999995 560.65 L295.7 560.65 L297.59999999999997 562.4 L295.7 564.15 L294.29999999999995 564.15 Z" fill="#fff"/>
<path d="M317.0 560.65 L318.40000000000003 560.65 L320.3 562.4 L318.40000000000003 564.15 L317.0 564.15 Z" fill="#fff"/>
<rect x="294.34999999999997" y="566.9" width="2.7" height="2.2" rx="0.5" fill="#20b0ff" opacity="1"/>
<path d="M317.90000000000003 566.7 L319.7 568 L317.90000000000003 569.3" fill="none" stroke="#cfcfcf" stroke-width="0.6" opacity="0.7"/>
<path d="M342.2 557.55 L343.6 557.55 L345.5 559.3 L343.6 561.05 L342.2 561.05 Z" fill="#fff"/>
<path d="M365.3 558.0 L367.09999999999997 559.3 L365.3 560.5999999999999" fill="none" stroke="#cfcfcf" stroke-width="0.6" opacity="0.7"/>
<rect x="342.25" y="563.9" width="2.7" height="2.2" rx="0.5" fill="#20b0ff" opacity="1"/>
<path d="M294.29999999999995 602.15 L295.7 602.15 L297.59999999999997 603.9 L295.7 605.65 L294.29999999999995 605.65 Z" fill="#fff"/>
<path d="M317.90000000000003 602.6 L319.7 603.9 L317.90000000000003 605.1999999999999" fill="none" stroke="#cfcfcf" stroke-width="0.6" opacity="0.7"/>
<path d="M294.8 608.3 A1.35 1.35 0 1 1 294.8 610.7" fill="none" stroke="#20b0ff" stroke-width="0.95" opacity="1"/><rect x="296.9" y="609.05" width="0.9" height="0.9" fill="#20b0ff" opacity="1"/>
<path d="M604.9 322.45 L606.3 322.45 L608.2 324.2 L606.3 325.95 L604.9 325.95 Z" fill="#fff"/>
<path d="M628.0 322.45 L629.4 322.45 L631.3000000000001 324.2 L629.4 325.95 L628.0 325.95 Z" fill="#fff"/>
<path d="M605.4 328.0 A1.35 1.35 0 1 1 605.4 330.4" fill="none" stroke="#20b0ff" stroke-width="0.95" opacity="1"/><rect x="607.5" y="328.75" width="0.9" height="0.9" fill="#20b0ff" opacity="1"/>
<rect x="604.9499999999999" y="332.9" width="2.7" height="2.2" rx="0.5" fill="#1e78e8" opacity="1"/>
<rect x="604.9499999999999" y="337.7" width="2.7" height="2.2" rx="0.5" fill="#801010" opacity="0.55"/>
<path d="M628.2 328.0 L629.3 328.0 L631.2 329.5 L629.3 331.0 L628.2 331.0 Z" fill="#c01010"/>
<path d="M668.6 327.45 L670.0 327.45 L671.9000000000001 329.2 L670.0 330.95 L668.6 330.95 Z" fill="#fff"/>
<path d="M691.1999999999999 327.45 L692.5999999999999 327.45 L694.5 329.2 L692.5999999999999 330.95 L691.1999999999999 330.95 Z" fill="#fff"/>
<rect x="668.65" y="332.9" width="2.7" height="2.2" rx="0.5" fill="#c01010" opacity="1"/>
<path d="M706.9 324.25 L708.3 324.25 L710.2 326 L708.3 327.75 L706.9 327.75 Z" fill="#fff"/>
<path d="M730.3000000000001 324.7 L732.1 326 L730.3000000000001 327.3" fill="none" stroke="#cfcfcf" stroke-width="0.6" opacity="0.7"/>
<rect x="706.9499999999999" y="329.9" width="2.7" height="2.2" rx="0.5" fill="#1a78c0" opacity="0.55"/>
<path d="M707.1999999999999 442.45 L708.5999999999999 442.45 L710.5 444.2 L708.5999999999999 445.95 L707.1999999999999 445.95 Z" fill="#fff"/>
<path d="M729.9 442.45 L731.3 442.45 L733.2 444.2 L731.3 445.95 L729.9 445.95 Z" fill="#fff"/>
<path d="M707.7 448.5 A1.35 1.35 0 1 1 707.7 450.9" fill="none" stroke="#20b0ff" stroke-width="0.95" opacity="1"/><rect x="709.8000000000001" y="449.25" width="0.9" height="0.9" fill="#20b0ff" opacity="1"/>
<rect x="707.25" y="453.2" width="2.7" height="2.2" rx="0.5" fill="#1e78e8" opacity="1"/>
<rect x="707.25" y="457.79999999999995" width="2.7" height="2.2" rx="0.5" fill="#801010" opacity="0.55"/>
<path d="M730.2 448.2 L731.3 448.2 L733.2 449.7 L731.3 451.2 L730.2 451.2 Z" fill="#c01010"/>
<path d="M768.3 446.05 L769.6999999999999 446.05 L771.6 447.8 L769.6999999999999 449.55 L768.3 449.55 Z" fill="#fff"/>
<path d="M791.0 446.05 L792.4 446.05 L794.3000000000001 447.8 L792.4 449.55 L791.0 449.55 Z" fill="#fff"/>
<path d="M791.0 451.55 L792.4 451.55 L794.3000000000001 453.3 L792.4 455.05 L791.0 455.05 Z" fill="#fff"/>
<rect x="768.35" y="452.2" width="2.7" height="2.2" rx="0.5" fill="#c01010" opacity="1"/>
<path d="M815.9 445.55 L817.3 445.55 L819.2 447.3 L817.3 449.05 L815.9 449.05 Z" fill="#fff"/>
<rect x="815.9499999999999" y="452.09999999999997" width="2.7" height="2.2" rx="0.5" fill="#b0f040" opacity="1"/>
<rect x="837.85" y="451.9" width="2.7" height="2.2" rx="0.5" fill="#1a78c0" opacity="0.55"/>
<path d="M838.9 455.75 L840.3 455.75 L842.2 457.5 L840.3 459.25 L838.9 459.25 Z" fill="#fff"/>
<path d="M857.4 445.55 L858.8 445.55 L860.7 447.3 L858.8 449.05 L857.4 449.05 Z" fill="#fff"/>
<rect x="857.4499999999999" y="452.09999999999997" width="2.7" height="2.2" rx="0.5" fill="#b0f040" opacity="1"/>
<rect x="857.4499999999999" y="455.79999999999995" width="2.7" height="2.2" rx="0.5" fill="#22e0b0" opacity="1"/>
<path d="M880.0 445.55 L881.4 445.55 L883.3000000000001 447.3 L881.4 449.05 L880.0 449.05 Z" fill="#fff"/>
<rect x="880.25" y="451.79999999999995" width="2.7" height="2.2" rx="0.5" fill="#20b0ff" opacity="1"/>
<path d="M880.0 455.75 L881.4 455.75 L883.3000000000001 457.5 L881.4 459.25 L880.0 459.25 Z" fill="#fff"/>
<path d="M880.0 461.55 L881.4 461.55 L883.3000000000001 463.3 L881.4 465.05 L880.0 465.05 Z" fill="#fff"/>
<path d="M880.5 467.2 A1.35 1.35 0 1 1 880.5 469.59999999999997" fill="none" stroke="#22d0a0" stroke-width="0.95" opacity="1"/><rect x="882.6" y="467.95" width="0.9" height="0.9" fill="#22d0a0" opacity="1"/>
<rect x="825.65" y="479.29999999999995" width="2.7" height="2.2" rx="0.5" fill="#22e0b0" opacity="1"/>
<path d="M826.1 483.2 A1.35 1.35 0 1 1 826.1 485.59999999999997" fill="none" stroke="#22d0a0" stroke-width="0.95" opacity="1"/><rect x="828.2" y="483.95" width="0.9" height="0.9" fill="#22d0a0" opacity="1"/>
<rect x="837.65" y="481.0" width="2.7" height="2.2" rx="0.5" fill="#22e0b0" opacity="1"/>
<rect x="832.4" y="482" width="1.8" height="0.8" fill="#999"/>
<path d="M940.8 419.45 L942.1999999999999 419.45 L944.1 421.2 L942.1999999999999 422.95 L940.8 422.95 Z" fill="#fff"/>
<rect x="940.85" y="425.0" width="2.7" height="2.2" rx="0.5" fill="#20b0ff" opacity="1"/>
<rect x="958.65" y="424.9" width="2.7" height="2.2" rx="0.5" fill="#1a78c0" opacity="0.55"/>
<path d="M934.1999999999999 455.45 L935.5999999999999 455.45 L937.5 457.2 L935.5999999999999 458.95 L934.1999999999999 458.95 Z" fill="#fff"/>
<path d="M957.6 455.9 L959.4 457.2 L957.6 458.5" fill="none" stroke="#cfcfcf" stroke-width="0.6" opacity="0.7"/>
<rect x="934.25" y="460.59999999999997" width="2.7" height="2.2" rx="0.5" fill="#1a78c0" opacity="0.55"/>
<path d="M959.6999999999999 499.95 L961.0999999999999 499.95 L963.0 501.7 L961.0999999999999 503.45 L959.6999999999999 503.45 Z" fill="#fff"/>
<path d="M983.3000000000001 500.4 L985.1 501.7 L983.3000000000001 503.0" fill="none" stroke="#cfcfcf" stroke-width="0.6" opacity="0.7"/>
<rect x="959.65" y="505.7" width="2.7" height="2.2" rx="0.5" fill="#1a78c0" opacity="0.55"/>
<rect x="550.65" y="503.79999999999995" width="2.7" height="2.2" rx="0.5" fill="#1a70b0" opacity="0.55"/>
<rect x="572.85" y="503.59999999999997" width="2.7" height="2.2" rx="0.5" fill="#20b0ff" opacity="1"/>
<rect x="614.05" y="503.59999999999997" width="2.7" height="2.2" rx="0.5" fill="#20b0ff" opacity="1"/>
<rect x="614.05" y="507.9" width="2.7" height="2.2" rx="0.5" fill="#1a58b0" opacity="0.55"/>
<rect x="637.15" y="503.59999999999997" width="2.7" height="2.2" rx="0.5" fill="#801010" opacity="0.55"/>
<rect x="637.25" y="507.9" width="2.7" height="2.2" rx="0.5" fill="#b0f040" opacity="1"/>
<text x="748" y="502.4" font-size="4.3" fill="#c4c4c4" text-anchor="middle">1 / (rpm / 60)</text>
<rect x="741" y="505.6" width="13" height="1.4" fill="#777" opacity="0.6" rx="0.6"/>
<rect x="735.65" y="505.7" width="2.7" height="2.2" rx="0.5" fill="#b0f040" opacity="1"/>
<rect x="756.15" y="505.7" width="2.7" height="2.2" rx="0.5" fill="#b0f040" opacity="1"/></g>
<g id="bubbles" opacity="0.999"><rect x="26.5" y="26.5" width="275" height="26" rx="4" ry="4" fill="url(#bub)" stroke="#fff" stroke-width="1.2"/>
<path d="M33.8 52.6 L42.2 52.6 Q39.4 54.6 38.7 59.6 L37.3 59.6 Q36.6 54.6 33.8 52.6 Z" fill="url(#arr)"/>
<text x="36.2" y="44.0" font-size="12.8" fill="#434343" stroke="#434343" stroke-width="0.18" textLength="256.7" lengthAdjust="spacingAndGlyphs" xml:space="preserve">Check if we have a shoot ability.  If not, add it.</text>
<rect x="26.5" y="154.5" width="451" height="26" rx="4" ry="4" fill="url(#bub)" stroke="#fff" stroke-width="1.2"/>
<path d="M33.8 180.6 L42.2 180.6 Q39.4 182.6 38.7 187.6 L37.3 187.6 Q36.6 182.6 33.8 180.6 Z" fill="url(#arr)"/>
<text x="36.0" y="172.0" font-size="12.8" fill="#434343" stroke="#434343" stroke-width="0.18" textLength="433.5" lengthAdjust="spacingAndGlyphs" xml:space="preserve">Get our instance of the shoot ability.  The handle should be valid by this point</text>
<rect x="20.5" y="284.5" width="438" height="26" rx="4" ry="4" fill="url(#bub)" stroke="#fff" stroke-width="1.2"/>
<path d="M27.8 310.6 L36.2 310.6 Q33.4 312.6 32.7 317.6 L31.3 317.6 Q30.6 312.6 27.8 310.6 Z" fill="url(#arr)"/>
<text x="29.9" y="302.0" font-size="12.8" fill="#434343" stroke="#434343" stroke-width="0.18" textLength="420.1" lengthAdjust="spacingAndGlyphs" xml:space="preserve">End both abilities when we complete a burst, end full auto fire, or fail to fire</text>
<rect x="542.5" y="256.5" width="647" height="26" rx="4" ry="4" fill="url(#bub)" stroke="#fff" stroke-width="1.2"/>
<path d="M549.5 282.6 L557.9000000000001 282.6 Q555.1 284.6 554.4000000000001 289.6 L553.0 289.6 Q552.3000000000001 284.6 549.5 282.6 Z" fill="url(#arr)"/>
<text x="550.8" y="274.0" font-size="12.8" fill="#434343" stroke="#434343" stroke-width="0.18" textLength="624.2" lengthAdjust="spacingAndGlyphs" xml:space="preserve">Single Shot Special Case.  If we are shooting one bullet, we can batch the entirety of the shot into a single RPC.</text>
<rect x="539.5" y="372.5" width="140" height="26" rx="4" ry="4" fill="url(#bub)" stroke="#fff" stroke-width="1.2"/>
<path d="M546.8 398.6 L555.2 398.6 Q552.4 400.6 551.7 405.6 L550.3 405.6 Q549.6 400.6 546.8 398.6 Z" fill="url(#arr)"/>
<text x="548.2" y="390.0" font-size="12.8" fill="#434343" stroke="#434343" stroke-width="0.18" textLength="122.5" lengthAdjust="spacingAndGlyphs" xml:space="preserve">Full Auto or Burst Fire</text></g>
</svg>

</body></html>
